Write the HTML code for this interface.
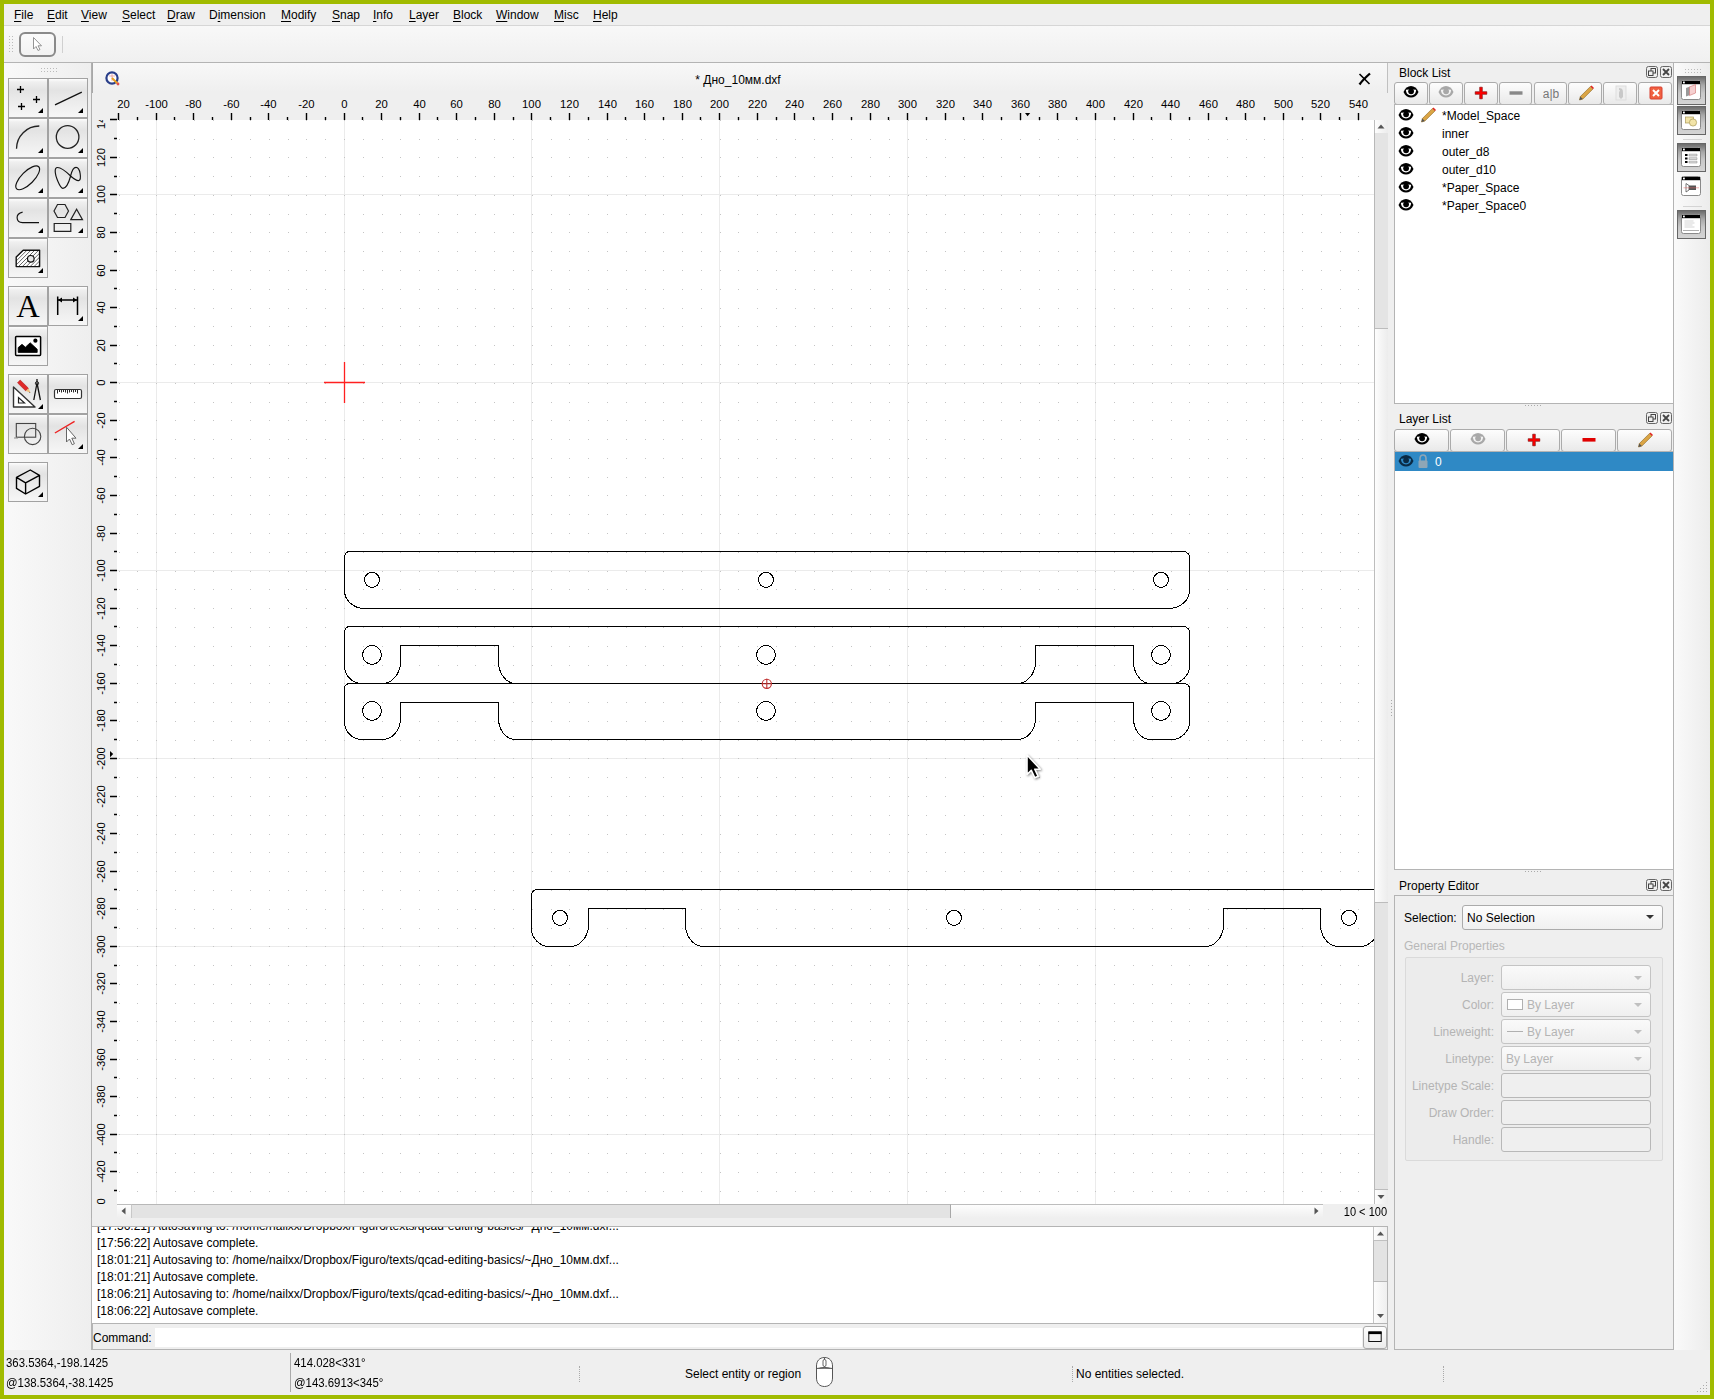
<!DOCTYPE html>
<html><head><meta charset="utf-8"><title>QCAD</title>
<style>
html,body{margin:0;padding:0}
body{width:1714px;height:1399px;overflow:hidden;position:relative;background:#a0bb00;font-family:"Liberation Sans",sans-serif;font-size:12px;color:#000}
div{position:absolute;box-sizing:border-box}
.t{white-space:nowrap;line-height:14px}
.u{text-decoration:underline;text-underline-offset:2px}
.tb{border:1px solid #a2a2a2;background:linear-gradient(#fdfdfd 0,#efefef 8%,#e3e3e3 30%,#ececec 60%,#f6f6f6 100%)}
.db{border:1px solid #ababab;border-radius:3px;background:linear-gradient(#fdfdfd,#f3f3f3 50%,#e9e9e9)}
.cb{border:1px solid #b8b8b8;border-radius:3px;background:linear-gradient(#fbfbfb,#f0f0f0)}
.dis{color:#b4b4b4}
</style></head><body>
<div style="left:4px;top:4px;width:1706px;height:1391px;background:#efefef"></div>
<div style="left:4px;top:25px;width:1706px;height:1px;background:#d6d6d6"></div>
<div class="t" style="left:14px;top:8.3px;font-size:12px;"><span class="u">F</span>ile</div>
<div class="t" style="left:47px;top:8.3px;font-size:12px;"><span class="u">E</span>dit</div>
<div class="t" style="left:81px;top:8.3px;font-size:12px;"><span class="u">V</span>iew</div>
<div class="t" style="left:122px;top:8.3px;font-size:12px;"><span class="u">S</span>elect</div>
<div class="t" style="left:167px;top:8.3px;font-size:12px;"><span class="u">D</span>raw</div>
<div class="t" style="left:209px;top:8.3px;font-size:12px;">D<span class="u">i</span>mension</div>
<div class="t" style="left:281px;top:8.3px;font-size:12px;"><span class="u">M</span>odify</div>
<div class="t" style="left:332px;top:8.3px;font-size:12px;"><span class="u">S</span>nap</div>
<div class="t" style="left:373px;top:8.3px;font-size:12px;"><span class="u">I</span>nfo</div>
<div class="t" style="left:409px;top:8.3px;font-size:12px;"><span class="u">L</span>ayer</div>
<div class="t" style="left:453px;top:8.3px;font-size:12px;"><span class="u">B</span>lock</div>
<div class="t" style="left:496px;top:8.3px;font-size:12px;"><span class="u">W</span>indow</div>
<div class="t" style="left:554px;top:8.3px;font-size:12px;"><span class="u">M</span>isc</div>
<div class="t" style="left:593px;top:8.3px;font-size:12px;"><span class="u">H</span>elp</div>
<div style="left:4px;top:26px;width:1706px;height:36px;background:linear-gradient(#f8f8f8,#f0f0f0)"></div>
<div style="left:4px;top:62px;width:1706px;height:1px;background:#b4b4b4"></div>
<svg style="position:absolute;left:9px;top:36px;" width="4" height="16" viewBox="0 0 4 16"><rect x="0" y="0" width="1" height="1" fill="#bbb"/><rect x="0" y="3" width="1" height="1" fill="#bbb"/><rect x="0" y="6" width="1" height="1" fill="#bbb"/><rect x="0" y="9" width="1" height="1" fill="#bbb"/><rect x="0" y="12" width="1" height="1" fill="#bbb"/><rect x="0" y="15" width="1" height="1" fill="#bbb"/><rect x="3" y="0" width="1" height="1" fill="#bbb"/><rect x="3" y="3" width="1" height="1" fill="#bbb"/><rect x="3" y="6" width="1" height="1" fill="#bbb"/><rect x="3" y="9" width="1" height="1" fill="#bbb"/><rect x="3" y="12" width="1" height="1" fill="#bbb"/><rect x="3" y="15" width="1" height="1" fill="#bbb"/></svg>
<div style="left:19px;top:32px;width:37px;height:25px;border:2px solid #8a8a8a;border-radius:6px;background:linear-gradient(#fafafa,#f2f2f2)"></div>
<svg style="position:absolute;left:30px;top:36px;" width="14" height="18" viewBox="0 0 14 18"><path d="M3.5 1.5V13L6 10.5L8 14.5L10 13.5L8 9.8H11.5Z" fill="#fff" stroke="#888" stroke-width="0.9"/></svg>
<div style="left:62px;top:36px;width:1px;height:17px;background:#d0d0d0"></div>
<div style="left:4px;top:63px;width:88px;height:1287px;background:linear-gradient(90deg,#f9f9f9,#eeeeee)"></div>
<svg style="position:absolute;left:41px;top:68px;" width="18" height="4" viewBox="0 0 18 4"><rect x="0" y="0" width="1" height="1" fill="#bbb"/><rect x="0" y="3" width="1" height="1" fill="#bbb"/><rect x="3" y="0" width="1" height="1" fill="#bbb"/><rect x="3" y="3" width="1" height="1" fill="#bbb"/><rect x="6" y="0" width="1" height="1" fill="#bbb"/><rect x="6" y="3" width="1" height="1" fill="#bbb"/><rect x="9" y="0" width="1" height="1" fill="#bbb"/><rect x="9" y="3" width="1" height="1" fill="#bbb"/><rect x="12" y="0" width="1" height="1" fill="#bbb"/><rect x="12" y="3" width="1" height="1" fill="#bbb"/><rect x="15" y="0" width="1" height="1" fill="#bbb"/><rect x="15" y="3" width="1" height="1" fill="#bbb"/></svg>
<div class="tb" style="left:8px;top:78px;width:40px;height:40px;"></div>
<svg style="position:absolute;left:8px;top:78px;" width="40" height="40" viewBox="0 0 40 40"><path d="M9.0 11.5h7.0M12.5 8.0v7.0M25.0 21.5h7.0M28.5 18.0v7.0M10.0 28.5h7.0M13.5 25.0v7.0" stroke="#000" stroke-width="1.3" fill="none"/><path d="M30 35L35 30V35Z" fill="#000"/></svg>
<div class="tb" style="left:48px;top:78px;width:40px;height:40px;"></div>
<svg style="position:absolute;left:48px;top:78px;" width="40" height="40" viewBox="0 0 40 40"><path d="M7 26.8L33.8 14.2" stroke="#111" stroke-width="1.3"/><path d="M30 35L35 30V35Z" fill="#000"/></svg>
<div class="tb" style="left:8px;top:118px;width:40px;height:40px;"></div>
<svg style="position:absolute;left:8px;top:118px;" width="40" height="40" viewBox="0 0 40 40"><path d="M8.5 30.8A22.8 22.8 0 0 1 31.3 8" stroke="#222" stroke-width="1.3" fill="none"/><path d="M30 35L35 30V35Z" fill="#000"/></svg>
<div class="tb" style="left:48px;top:118px;width:40px;height:40px;"></div>
<svg style="position:absolute;left:48px;top:118px;" width="40" height="40" viewBox="0 0 40 40"><circle cx="19.6" cy="19" r="11.3" stroke="#222" stroke-width="1.3" fill="none"/><path d="M30 35L35 30V35Z" fill="#000"/></svg>
<div class="tb" style="left:8px;top:158px;width:40px;height:40px;"></div>
<svg style="position:absolute;left:8px;top:158px;" width="40" height="40" viewBox="0 0 40 40"><ellipse cx="19.7" cy="19.8" rx="15.6" ry="6.3" transform="rotate(-45 19.7 19.8)" stroke="#111" stroke-width="1.15" fill="none"/><path d="M30 35L35 30V35Z" fill="#000"/></svg>
<div class="tb" style="left:48px;top:158px;width:40px;height:40px;"></div>
<svg style="position:absolute;left:48px;top:158px;" width="40" height="40" viewBox="0 0 40 40"><path d="M9.5 9.5C13 9.5 18 13.5 22.6 18C26 21 29 23 31 22.5C33.5 21.5 32.5 9.3 28 9.3C25 9.3 23.5 14 22.6 18C21 24 18 30.3 14.9 30.3C12 30.3 7.2 18 7.2 13C7.2 10.5 8 9.5 9.5 9.5Z" stroke="#111" stroke-width="1.15" fill="none"/><path d="M30 35L35 30V35Z" fill="#000"/></svg>
<div class="tb" style="left:8px;top:198px;width:40px;height:40px;"></div>
<svg style="position:absolute;left:8px;top:198px;" width="40" height="40" viewBox="0 0 40 40"><path d="M14.6 14.1C11 15 9 17.5 9.1 19.8C9.2 22.7 11.5 24.6 14.5 24.6H31" stroke="#111" stroke-width="1.15" fill="none"/><path d="M30 35L35 30V35Z" fill="#000"/></svg>
<div class="tb" style="left:48px;top:198px;width:40px;height:40px;"></div>
<svg style="position:absolute;left:48px;top:198px;" width="40" height="40" viewBox="0 0 40 40"><path d="M6 13L9.5 6.5H17L20.5 13L17 19.5H9.5ZM22.8 21.6L28.6 11.2L34.5 21.6ZM6.2 25.5H22.8V33.4H6.2Z" stroke="#222" stroke-width="1.2" fill="none"/><path d="M30 35L35 30V35Z" fill="#000"/></svg>
<div class="tb" style="left:8px;top:238px;width:40px;height:40px;"></div>
<svg style="position:absolute;left:8px;top:238px;" width="40" height="40" viewBox="0 0 40 40"><defs><clipPath id="hc"><path d="M8.2 28.6V19L15.2 12.3H31.6V28.6Z"/></clipPath></defs><path d="M8.2 28.6V19L15.2 12.3H31.6V28.6Z" fill="#fff"/><g clip-path="url(#hc)" stroke="#333" stroke-width="0.75"><path d="M-40.0 40L0.0 0M-36.1 40L3.9 0M-32.2 40L7.8 0M-28.3 40L11.7 0M-24.4 40L15.6 0M-20.5 40L19.5 0M-16.6 40L23.4 0M-12.7 40L27.3 0M-8.8 40L31.2 0M-4.9 40L35.1 0M-1.0 40L39.0 0M2.9 40L42.9 0M6.8 40L46.8 0M10.7 40L50.7 0M14.6 40L54.6 0M18.5 40L58.5 0M22.4 40L62.4 0M26.3 40L66.3 0M30.2 40L70.2 0M34.1 40L74.1 0M38.0 40L78.0 0M41.9 40L81.9 0"/></g><circle cx="22.8" cy="20.8" r="3.3" fill="#e8e8e8" stroke="#111" stroke-width="1.2"/><path d="M8.2 28.6V19L15.2 12.3H31.6V28.6Z" stroke="#111" stroke-width="1.4" fill="none" stroke-linejoin="round"/><path d="M30 35L35 30V35Z" fill="#000"/></svg>
<div class="tb" style="left:8px;top:286px;width:40px;height:40px;"></div>
<svg style="position:absolute;left:8px;top:286px;" width="40" height="40" viewBox="0 0 40 40"><text x="19.9" y="30.7" font-family="Liberation Serif, serif" font-size="32.5" text-anchor="middle" fill="#000">A</text></svg>
<div class="tb" style="left:48px;top:286px;width:40px;height:40px;"></div>
<svg style="position:absolute;left:48px;top:286px;" width="40" height="40" viewBox="0 0 40 40"><path d="M9.7 10.5V29M29.5 10.5V29M10 14H29" stroke="#000" stroke-width="1.5"/><path d="M10 14L14 11.5V16.5ZM29 14L25 11.5V16.5Z" fill="#000"/><path d="M30 35L35 30V35Z" fill="#000"/></svg>
<div class="tb" style="left:8px;top:326px;width:40px;height:40px;"></div>
<svg style="position:absolute;left:8px;top:326px;" width="40" height="40" viewBox="0 0 40 40"><rect x="7.6" y="10.4" width="25" height="19" rx="0.8" fill="#fff" stroke="#000" stroke-width="1.5"/><path d="M10.2 26.4V21.6L14 18.3L17.4 21.2L22.2 16.8L29.2 23.2V26.4Z" fill="#000" stroke="#000" stroke-width="0.8" stroke-linejoin="round"/><circle cx="27.4" cy="14.7" r="2.1" fill="#000"/></svg>
<div class="tb" style="left:8px;top:374px;width:40px;height:40px;"></div>
<svg style="position:absolute;left:8px;top:374px;" width="40" height="40" viewBox="0 0 40 40"><path d="M5.5 33V13L27 33Z" stroke="#333" stroke-width="1.4" fill="#fff" stroke-linejoin="round"/><path d="M10.5 29V23.5L16.5 29Z" stroke="#222" stroke-width="1.2" fill="none"/><path d="M9.5 8.8L12.2 6L20.5 14.3L17.8 17Z" fill="#e02828" stroke="#a01010" stroke-width="0.5"/><path d="M17.8 17L20.5 14.3L22.5 18.8Z" fill="#f0c080"/><path d="M21.5 17.8L22.5 18.8L21 18.6Z" fill="#333"/><path d="M29 5V8.5M29 9L25.8 26M29 9L32.4 26" stroke="#111" stroke-width="1.3" fill="none"/><circle cx="29" cy="9.3" r="1.6" fill="none" stroke="#111" stroke-width="1"/><path d="M30 35L35 30V35Z" fill="#000"/></svg>
<div class="tb" style="left:48px;top:374px;width:40px;height:40px;"></div>
<svg style="position:absolute;left:48px;top:374px;" width="40" height="40" viewBox="0 0 40 40"><rect x="6.5" y="15.5" width="27" height="9" rx="1.5" fill="#fff" stroke="#333" stroke-width="1.2"/><path d="M9.5 16v3.5M11.5 16v2M13.5 16v2.5M15.5 16v2M17.5 16v2.5M19.5 16v3.5M21.5 16v2.5M23.5 16v2M25.5 16v2.5M27.5 16v2M29.5 16v3.5" stroke="#111" stroke-width="0.9"/></svg>
<div class="tb" style="left:8px;top:414px;width:40px;height:40px;"></div>
<svg style="position:absolute;left:8px;top:414px;" width="40" height="40" viewBox="0 0 40 40"><rect x="8.3" y="9.5" width="19.4" height="13.7" fill="none" stroke="#444" stroke-width="1.1"/><circle cx="24.6" cy="22.4" r="8.2" fill="none" stroke="#444" stroke-width="1.1"/><path d="M6 24H10" stroke="#888" stroke-width="1"/></svg>
<div class="tb" style="left:48px;top:414px;width:40px;height:40px;"></div>
<svg style="position:absolute;left:48px;top:414px;" width="40" height="40" viewBox="0 0 40 40"><path d="M6.9 19L26.6 7.3" stroke="#ee2222" stroke-width="1.4"/><path d="M18.5 13.2V28L21.5 25L24.2 30.7L26.4 29.7L23.8 24.2H28Z" fill="#fff" stroke="#666" stroke-width="1"/><path d="M30 35L35 30V35Z" fill="#000"/></svg>
<div class="tb" style="left:8px;top:462px;width:40px;height:40px;"></div>
<svg style="position:absolute;left:8px;top:462px;" width="40" height="40" viewBox="0 0 40 40"><path d="M22.3 8L31.5 13.3V24.3L17.6 32L8.5 26.4V15.4ZM8.5 15.4L17.6 20.9L31.5 13.3M17.6 20.9V32" stroke="#000" stroke-width="1.4" fill="none" stroke-linejoin="round"/><path d="M30 35L35 30V35Z" fill="#000"/></svg>
<div style="left:91px;top:63px;width:1px;height:1287px;background:#b0b0b0"></div>
<div style="left:92px;top:63px;width:1296px;height:1163px;background:#efefef"></div>
<div style="left:92px;top:63px;width:1296px;height:29px;background:linear-gradient(#f8f8f8,#efefef)"></div>
<div style="left:92px;top:63px;width:1px;height:30px;background:#a8a8a8"></div>
<div style="left:1387px;top:63px;width:1px;height:30px;background:#c0c0c0"></div>
<svg style="position:absolute;left:105px;top:71px;" width="15" height="15" viewBox="0 0 15 15"><circle cx="7" cy="7" r="5.6" fill="#fff" stroke="#2a3f8a" stroke-width="2.2"/><path d="M4 5h6M7 3v7" stroke="#e08080" stroke-width="0.6"/><path d="M7 7L13 13" stroke="#e8a020" stroke-width="2"/><circle cx="13" cy="13" r="1.4" fill="#e05050"/></svg>
<div class="t" style="left:738px;width:0;top:72.8px;font-size:12px;"><span style="position:absolute;left:0;transform:translateX(-50%)">* Дно_10мм.dxf</span></div>
<svg style="position:absolute;left:1357px;top:72px;" width="15" height="14" viewBox="0 0 15 14"><path d="M2.5 12.5C5 9 9 5 13 1.5" stroke="#000" stroke-width="2.3" fill="none"/><path d="M2.5 2L12.5 12" stroke="#000" stroke-width="1.6"/></svg>
<div style="left:117px;top:120px;width:1257px;height:1084px;background:#fff"></div>
<svg style="position:absolute;left:0px;top:0px;pointer-events:none" width="1714" height="1399" viewBox="0 0 1714 1399"><defs><clipPath id="cc"><rect x="117" y="120" width="1257" height="1084"/></clipPath><clipPath id="rt"><rect x="117" y="92" width="1257" height="28"/></clipPath><clipPath id="rl"><rect x="93" y="120" width="24" height="1084"/></clipPath></defs><g clip-path="url(#cc)"><path d="M156.5 120V1204M344.5 120V1204M531.5 120V1204M719.5 120V1204M907.5 120V1204M1095.5 120V1204M1283.5 120V1204M117 1134.5H1374M117 946.5H1374M117 758.5H1374M117 570.5H1374M117 382.5H1374M117 194.5H1374" stroke="#ebebeb" stroke-width="1" fill="none"/>
<path d="M119 1191h1v1h-1zM119 1172h1v1h-1zM119 1153h1v1h-1zM119 1134h1v1h-1zM119 1115h1v1h-1zM119 1097h1v1h-1zM119 1078h1v1h-1zM119 1059h1v1h-1zM119 1040h1v1h-1zM119 1021h1v1h-1zM119 1003h1v1h-1zM119 984h1v1h-1zM119 965h1v1h-1zM119 946h1v1h-1zM119 928h1v1h-1zM119 909h1v1h-1zM119 890h1v1h-1zM119 871h1v1h-1zM119 852h1v1h-1zM119 834h1v1h-1zM119 815h1v1h-1zM119 796h1v1h-1zM119 777h1v1h-1zM119 758h1v1h-1zM119 740h1v1h-1zM119 721h1v1h-1zM119 702h1v1h-1zM119 683h1v1h-1zM119 665h1v1h-1zM119 646h1v1h-1zM119 627h1v1h-1zM119 608h1v1h-1zM119 589h1v1h-1zM119 571h1v1h-1zM119 552h1v1h-1zM119 533h1v1h-1zM119 514h1v1h-1zM119 495h1v1h-1zM119 477h1v1h-1zM119 458h1v1h-1zM119 439h1v1h-1zM119 420h1v1h-1zM119 402h1v1h-1zM119 383h1v1h-1zM119 364h1v1h-1zM119 345h1v1h-1zM119 326h1v1h-1zM119 308h1v1h-1zM119 289h1v1h-1zM119 270h1v1h-1zM119 251h1v1h-1zM119 232h1v1h-1zM119 214h1v1h-1zM119 195h1v1h-1zM119 176h1v1h-1zM119 157h1v1h-1zM119 139h1v1h-1zM119 120h1v1h-1zM137 1191h1v1h-1zM137 1172h1v1h-1zM137 1153h1v1h-1zM137 1134h1v1h-1zM137 1115h1v1h-1zM137 1097h1v1h-1zM137 1078h1v1h-1zM137 1059h1v1h-1zM137 1040h1v1h-1zM137 1021h1v1h-1zM137 1003h1v1h-1zM137 984h1v1h-1zM137 965h1v1h-1zM137 946h1v1h-1zM137 928h1v1h-1zM137 909h1v1h-1zM137 890h1v1h-1zM137 871h1v1h-1zM137 852h1v1h-1zM137 834h1v1h-1zM137 815h1v1h-1zM137 796h1v1h-1zM137 777h1v1h-1zM137 758h1v1h-1zM137 740h1v1h-1zM137 721h1v1h-1zM137 702h1v1h-1zM137 683h1v1h-1zM137 665h1v1h-1zM137 646h1v1h-1zM137 627h1v1h-1zM137 608h1v1h-1zM137 589h1v1h-1zM137 571h1v1h-1zM137 552h1v1h-1zM137 533h1v1h-1zM137 514h1v1h-1zM137 495h1v1h-1zM137 477h1v1h-1zM137 458h1v1h-1zM137 439h1v1h-1zM137 420h1v1h-1zM137 402h1v1h-1zM137 383h1v1h-1zM137 364h1v1h-1zM137 345h1v1h-1zM137 326h1v1h-1zM137 308h1v1h-1zM137 289h1v1h-1zM137 270h1v1h-1zM137 251h1v1h-1zM137 232h1v1h-1zM137 214h1v1h-1zM137 195h1v1h-1zM137 176h1v1h-1zM137 157h1v1h-1zM137 139h1v1h-1zM137 120h1v1h-1zM156 1191h1v1h-1zM156 1172h1v1h-1zM156 1153h1v1h-1zM156 1134h1v1h-1zM156 1115h1v1h-1zM156 1097h1v1h-1zM156 1078h1v1h-1zM156 1059h1v1h-1zM156 1040h1v1h-1zM156 1021h1v1h-1zM156 1003h1v1h-1zM156 984h1v1h-1zM156 965h1v1h-1zM156 946h1v1h-1zM156 928h1v1h-1zM156 909h1v1h-1zM156 890h1v1h-1zM156 871h1v1h-1zM156 852h1v1h-1zM156 834h1v1h-1zM156 815h1v1h-1zM156 796h1v1h-1zM156 777h1v1h-1zM156 758h1v1h-1zM156 740h1v1h-1zM156 721h1v1h-1zM156 702h1v1h-1zM156 683h1v1h-1zM156 665h1v1h-1zM156 646h1v1h-1zM156 627h1v1h-1zM156 608h1v1h-1zM156 589h1v1h-1zM156 571h1v1h-1zM156 552h1v1h-1zM156 533h1v1h-1zM156 514h1v1h-1zM156 495h1v1h-1zM156 477h1v1h-1zM156 458h1v1h-1zM156 439h1v1h-1zM156 420h1v1h-1zM156 402h1v1h-1zM156 383h1v1h-1zM156 364h1v1h-1zM156 345h1v1h-1zM156 326h1v1h-1zM156 308h1v1h-1zM156 289h1v1h-1zM156 270h1v1h-1zM156 251h1v1h-1zM156 232h1v1h-1zM156 214h1v1h-1zM156 195h1v1h-1zM156 176h1v1h-1zM156 157h1v1h-1zM156 139h1v1h-1zM156 120h1v1h-1zM175 1191h1v1h-1zM175 1172h1v1h-1zM175 1153h1v1h-1zM175 1134h1v1h-1zM175 1115h1v1h-1zM175 1097h1v1h-1zM175 1078h1v1h-1zM175 1059h1v1h-1zM175 1040h1v1h-1zM175 1021h1v1h-1zM175 1003h1v1h-1zM175 984h1v1h-1zM175 965h1v1h-1zM175 946h1v1h-1zM175 928h1v1h-1zM175 909h1v1h-1zM175 890h1v1h-1zM175 871h1v1h-1zM175 852h1v1h-1zM175 834h1v1h-1zM175 815h1v1h-1zM175 796h1v1h-1zM175 777h1v1h-1zM175 758h1v1h-1zM175 740h1v1h-1zM175 721h1v1h-1zM175 702h1v1h-1zM175 683h1v1h-1zM175 665h1v1h-1zM175 646h1v1h-1zM175 627h1v1h-1zM175 608h1v1h-1zM175 589h1v1h-1zM175 571h1v1h-1zM175 552h1v1h-1zM175 533h1v1h-1zM175 514h1v1h-1zM175 495h1v1h-1zM175 477h1v1h-1zM175 458h1v1h-1zM175 439h1v1h-1zM175 420h1v1h-1zM175 402h1v1h-1zM175 383h1v1h-1zM175 364h1v1h-1zM175 345h1v1h-1zM175 326h1v1h-1zM175 308h1v1h-1zM175 289h1v1h-1zM175 270h1v1h-1zM175 251h1v1h-1zM175 232h1v1h-1zM175 214h1v1h-1zM175 195h1v1h-1zM175 176h1v1h-1zM175 157h1v1h-1zM175 139h1v1h-1zM175 120h1v1h-1zM194 1191h1v1h-1zM194 1172h1v1h-1zM194 1153h1v1h-1zM194 1134h1v1h-1zM194 1115h1v1h-1zM194 1097h1v1h-1zM194 1078h1v1h-1zM194 1059h1v1h-1zM194 1040h1v1h-1zM194 1021h1v1h-1zM194 1003h1v1h-1zM194 984h1v1h-1zM194 965h1v1h-1zM194 946h1v1h-1zM194 928h1v1h-1zM194 909h1v1h-1zM194 890h1v1h-1zM194 871h1v1h-1zM194 852h1v1h-1zM194 834h1v1h-1zM194 815h1v1h-1zM194 796h1v1h-1zM194 777h1v1h-1zM194 758h1v1h-1zM194 740h1v1h-1zM194 721h1v1h-1zM194 702h1v1h-1zM194 683h1v1h-1zM194 665h1v1h-1zM194 646h1v1h-1zM194 627h1v1h-1zM194 608h1v1h-1zM194 589h1v1h-1zM194 571h1v1h-1zM194 552h1v1h-1zM194 533h1v1h-1zM194 514h1v1h-1zM194 495h1v1h-1zM194 477h1v1h-1zM194 458h1v1h-1zM194 439h1v1h-1zM194 420h1v1h-1zM194 402h1v1h-1zM194 383h1v1h-1zM194 364h1v1h-1zM194 345h1v1h-1zM194 326h1v1h-1zM194 308h1v1h-1zM194 289h1v1h-1zM194 270h1v1h-1zM194 251h1v1h-1zM194 232h1v1h-1zM194 214h1v1h-1zM194 195h1v1h-1zM194 176h1v1h-1zM194 157h1v1h-1zM194 139h1v1h-1zM194 120h1v1h-1zM213 1191h1v1h-1zM213 1172h1v1h-1zM213 1153h1v1h-1zM213 1134h1v1h-1zM213 1115h1v1h-1zM213 1097h1v1h-1zM213 1078h1v1h-1zM213 1059h1v1h-1zM213 1040h1v1h-1zM213 1021h1v1h-1zM213 1003h1v1h-1zM213 984h1v1h-1zM213 965h1v1h-1zM213 946h1v1h-1zM213 928h1v1h-1zM213 909h1v1h-1zM213 890h1v1h-1zM213 871h1v1h-1zM213 852h1v1h-1zM213 834h1v1h-1zM213 815h1v1h-1zM213 796h1v1h-1zM213 777h1v1h-1zM213 758h1v1h-1zM213 740h1v1h-1zM213 721h1v1h-1zM213 702h1v1h-1zM213 683h1v1h-1zM213 665h1v1h-1zM213 646h1v1h-1zM213 627h1v1h-1zM213 608h1v1h-1zM213 589h1v1h-1zM213 571h1v1h-1zM213 552h1v1h-1zM213 533h1v1h-1zM213 514h1v1h-1zM213 495h1v1h-1zM213 477h1v1h-1zM213 458h1v1h-1zM213 439h1v1h-1zM213 420h1v1h-1zM213 402h1v1h-1zM213 383h1v1h-1zM213 364h1v1h-1zM213 345h1v1h-1zM213 326h1v1h-1zM213 308h1v1h-1zM213 289h1v1h-1zM213 270h1v1h-1zM213 251h1v1h-1zM213 232h1v1h-1zM213 214h1v1h-1zM213 195h1v1h-1zM213 176h1v1h-1zM213 157h1v1h-1zM213 139h1v1h-1zM213 120h1v1h-1zM231 1191h1v1h-1zM231 1172h1v1h-1zM231 1153h1v1h-1zM231 1134h1v1h-1zM231 1115h1v1h-1zM231 1097h1v1h-1zM231 1078h1v1h-1zM231 1059h1v1h-1zM231 1040h1v1h-1zM231 1021h1v1h-1zM231 1003h1v1h-1zM231 984h1v1h-1zM231 965h1v1h-1zM231 946h1v1h-1zM231 928h1v1h-1zM231 909h1v1h-1zM231 890h1v1h-1zM231 871h1v1h-1zM231 852h1v1h-1zM231 834h1v1h-1zM231 815h1v1h-1zM231 796h1v1h-1zM231 777h1v1h-1zM231 758h1v1h-1zM231 740h1v1h-1zM231 721h1v1h-1zM231 702h1v1h-1zM231 683h1v1h-1zM231 665h1v1h-1zM231 646h1v1h-1zM231 627h1v1h-1zM231 608h1v1h-1zM231 589h1v1h-1zM231 571h1v1h-1zM231 552h1v1h-1zM231 533h1v1h-1zM231 514h1v1h-1zM231 495h1v1h-1zM231 477h1v1h-1zM231 458h1v1h-1zM231 439h1v1h-1zM231 420h1v1h-1zM231 402h1v1h-1zM231 383h1v1h-1zM231 364h1v1h-1zM231 345h1v1h-1zM231 326h1v1h-1zM231 308h1v1h-1zM231 289h1v1h-1zM231 270h1v1h-1zM231 251h1v1h-1zM231 232h1v1h-1zM231 214h1v1h-1zM231 195h1v1h-1zM231 176h1v1h-1zM231 157h1v1h-1zM231 139h1v1h-1zM231 120h1v1h-1zM250 1191h1v1h-1zM250 1172h1v1h-1zM250 1153h1v1h-1zM250 1134h1v1h-1zM250 1115h1v1h-1zM250 1097h1v1h-1zM250 1078h1v1h-1zM250 1059h1v1h-1zM250 1040h1v1h-1zM250 1021h1v1h-1zM250 1003h1v1h-1zM250 984h1v1h-1zM250 965h1v1h-1zM250 946h1v1h-1zM250 928h1v1h-1zM250 909h1v1h-1zM250 890h1v1h-1zM250 871h1v1h-1zM250 852h1v1h-1zM250 834h1v1h-1zM250 815h1v1h-1zM250 796h1v1h-1zM250 777h1v1h-1zM250 758h1v1h-1zM250 740h1v1h-1zM250 721h1v1h-1zM250 702h1v1h-1zM250 683h1v1h-1zM250 665h1v1h-1zM250 646h1v1h-1zM250 627h1v1h-1zM250 608h1v1h-1zM250 589h1v1h-1zM250 571h1v1h-1zM250 552h1v1h-1zM250 533h1v1h-1zM250 514h1v1h-1zM250 495h1v1h-1zM250 477h1v1h-1zM250 458h1v1h-1zM250 439h1v1h-1zM250 420h1v1h-1zM250 402h1v1h-1zM250 383h1v1h-1zM250 364h1v1h-1zM250 345h1v1h-1zM250 326h1v1h-1zM250 308h1v1h-1zM250 289h1v1h-1zM250 270h1v1h-1zM250 251h1v1h-1zM250 232h1v1h-1zM250 214h1v1h-1zM250 195h1v1h-1zM250 176h1v1h-1zM250 157h1v1h-1zM250 139h1v1h-1zM250 120h1v1h-1zM269 1191h1v1h-1zM269 1172h1v1h-1zM269 1153h1v1h-1zM269 1134h1v1h-1zM269 1115h1v1h-1zM269 1097h1v1h-1zM269 1078h1v1h-1zM269 1059h1v1h-1zM269 1040h1v1h-1zM269 1021h1v1h-1zM269 1003h1v1h-1zM269 984h1v1h-1zM269 965h1v1h-1zM269 946h1v1h-1zM269 928h1v1h-1zM269 909h1v1h-1zM269 890h1v1h-1zM269 871h1v1h-1zM269 852h1v1h-1zM269 834h1v1h-1zM269 815h1v1h-1zM269 796h1v1h-1zM269 777h1v1h-1zM269 758h1v1h-1zM269 740h1v1h-1zM269 721h1v1h-1zM269 702h1v1h-1zM269 683h1v1h-1zM269 665h1v1h-1zM269 646h1v1h-1zM269 627h1v1h-1zM269 608h1v1h-1zM269 589h1v1h-1zM269 571h1v1h-1zM269 552h1v1h-1zM269 533h1v1h-1zM269 514h1v1h-1zM269 495h1v1h-1zM269 477h1v1h-1zM269 458h1v1h-1zM269 439h1v1h-1zM269 420h1v1h-1zM269 402h1v1h-1zM269 383h1v1h-1zM269 364h1v1h-1zM269 345h1v1h-1zM269 326h1v1h-1zM269 308h1v1h-1zM269 289h1v1h-1zM269 270h1v1h-1zM269 251h1v1h-1zM269 232h1v1h-1zM269 214h1v1h-1zM269 195h1v1h-1zM269 176h1v1h-1zM269 157h1v1h-1zM269 139h1v1h-1zM269 120h1v1h-1zM288 1191h1v1h-1zM288 1172h1v1h-1zM288 1153h1v1h-1zM288 1134h1v1h-1zM288 1115h1v1h-1zM288 1097h1v1h-1zM288 1078h1v1h-1zM288 1059h1v1h-1zM288 1040h1v1h-1zM288 1021h1v1h-1zM288 1003h1v1h-1zM288 984h1v1h-1zM288 965h1v1h-1zM288 946h1v1h-1zM288 928h1v1h-1zM288 909h1v1h-1zM288 890h1v1h-1zM288 871h1v1h-1zM288 852h1v1h-1zM288 834h1v1h-1zM288 815h1v1h-1zM288 796h1v1h-1zM288 777h1v1h-1zM288 758h1v1h-1zM288 740h1v1h-1zM288 721h1v1h-1zM288 702h1v1h-1zM288 683h1v1h-1zM288 665h1v1h-1zM288 646h1v1h-1zM288 627h1v1h-1zM288 608h1v1h-1zM288 589h1v1h-1zM288 571h1v1h-1zM288 552h1v1h-1zM288 533h1v1h-1zM288 514h1v1h-1zM288 495h1v1h-1zM288 477h1v1h-1zM288 458h1v1h-1zM288 439h1v1h-1zM288 420h1v1h-1zM288 402h1v1h-1zM288 383h1v1h-1zM288 364h1v1h-1zM288 345h1v1h-1zM288 326h1v1h-1zM288 308h1v1h-1zM288 289h1v1h-1zM288 270h1v1h-1zM288 251h1v1h-1zM288 232h1v1h-1zM288 214h1v1h-1zM288 195h1v1h-1zM288 176h1v1h-1zM288 157h1v1h-1zM288 139h1v1h-1zM288 120h1v1h-1zM306 1191h1v1h-1zM306 1172h1v1h-1zM306 1153h1v1h-1zM306 1134h1v1h-1zM306 1115h1v1h-1zM306 1097h1v1h-1zM306 1078h1v1h-1zM306 1059h1v1h-1zM306 1040h1v1h-1zM306 1021h1v1h-1zM306 1003h1v1h-1zM306 984h1v1h-1zM306 965h1v1h-1zM306 946h1v1h-1zM306 928h1v1h-1zM306 909h1v1h-1zM306 890h1v1h-1zM306 871h1v1h-1zM306 852h1v1h-1zM306 834h1v1h-1zM306 815h1v1h-1zM306 796h1v1h-1zM306 777h1v1h-1zM306 758h1v1h-1zM306 740h1v1h-1zM306 721h1v1h-1zM306 702h1v1h-1zM306 683h1v1h-1zM306 665h1v1h-1zM306 646h1v1h-1zM306 627h1v1h-1zM306 608h1v1h-1zM306 589h1v1h-1zM306 571h1v1h-1zM306 552h1v1h-1zM306 533h1v1h-1zM306 514h1v1h-1zM306 495h1v1h-1zM306 477h1v1h-1zM306 458h1v1h-1zM306 439h1v1h-1zM306 420h1v1h-1zM306 402h1v1h-1zM306 383h1v1h-1zM306 364h1v1h-1zM306 345h1v1h-1zM306 326h1v1h-1zM306 308h1v1h-1zM306 289h1v1h-1zM306 270h1v1h-1zM306 251h1v1h-1zM306 232h1v1h-1zM306 214h1v1h-1zM306 195h1v1h-1zM306 176h1v1h-1zM306 157h1v1h-1zM306 139h1v1h-1zM306 120h1v1h-1zM325 1191h1v1h-1zM325 1172h1v1h-1zM325 1153h1v1h-1zM325 1134h1v1h-1zM325 1115h1v1h-1zM325 1097h1v1h-1zM325 1078h1v1h-1zM325 1059h1v1h-1zM325 1040h1v1h-1zM325 1021h1v1h-1zM325 1003h1v1h-1zM325 984h1v1h-1zM325 965h1v1h-1zM325 946h1v1h-1zM325 928h1v1h-1zM325 909h1v1h-1zM325 890h1v1h-1zM325 871h1v1h-1zM325 852h1v1h-1zM325 834h1v1h-1zM325 815h1v1h-1zM325 796h1v1h-1zM325 777h1v1h-1zM325 758h1v1h-1zM325 740h1v1h-1zM325 721h1v1h-1zM325 702h1v1h-1zM325 683h1v1h-1zM325 665h1v1h-1zM325 646h1v1h-1zM325 627h1v1h-1zM325 608h1v1h-1zM325 589h1v1h-1zM325 571h1v1h-1zM325 552h1v1h-1zM325 533h1v1h-1zM325 514h1v1h-1zM325 495h1v1h-1zM325 477h1v1h-1zM325 458h1v1h-1zM325 439h1v1h-1zM325 420h1v1h-1zM325 402h1v1h-1zM325 383h1v1h-1zM325 364h1v1h-1zM325 345h1v1h-1zM325 326h1v1h-1zM325 308h1v1h-1zM325 289h1v1h-1zM325 270h1v1h-1zM325 251h1v1h-1zM325 232h1v1h-1zM325 214h1v1h-1zM325 195h1v1h-1zM325 176h1v1h-1zM325 157h1v1h-1zM325 139h1v1h-1zM325 120h1v1h-1zM344 1191h1v1h-1zM344 1172h1v1h-1zM344 1153h1v1h-1zM344 1134h1v1h-1zM344 1115h1v1h-1zM344 1097h1v1h-1zM344 1078h1v1h-1zM344 1059h1v1h-1zM344 1040h1v1h-1zM344 1021h1v1h-1zM344 1003h1v1h-1zM344 984h1v1h-1zM344 965h1v1h-1zM344 946h1v1h-1zM344 928h1v1h-1zM344 909h1v1h-1zM344 890h1v1h-1zM344 871h1v1h-1zM344 852h1v1h-1zM344 834h1v1h-1zM344 815h1v1h-1zM344 796h1v1h-1zM344 777h1v1h-1zM344 758h1v1h-1zM344 740h1v1h-1zM344 721h1v1h-1zM344 702h1v1h-1zM344 683h1v1h-1zM344 665h1v1h-1zM344 646h1v1h-1zM344 627h1v1h-1zM344 608h1v1h-1zM344 589h1v1h-1zM344 571h1v1h-1zM344 552h1v1h-1zM344 533h1v1h-1zM344 514h1v1h-1zM344 495h1v1h-1zM344 477h1v1h-1zM344 458h1v1h-1zM344 439h1v1h-1zM344 420h1v1h-1zM344 402h1v1h-1zM344 383h1v1h-1zM344 364h1v1h-1zM344 345h1v1h-1zM344 326h1v1h-1zM344 308h1v1h-1zM344 289h1v1h-1zM344 270h1v1h-1zM344 251h1v1h-1zM344 232h1v1h-1zM344 214h1v1h-1zM344 195h1v1h-1zM344 176h1v1h-1zM344 157h1v1h-1zM344 139h1v1h-1zM344 120h1v1h-1zM363 1191h1v1h-1zM363 1172h1v1h-1zM363 1153h1v1h-1zM363 1134h1v1h-1zM363 1115h1v1h-1zM363 1097h1v1h-1zM363 1078h1v1h-1zM363 1059h1v1h-1zM363 1040h1v1h-1zM363 1021h1v1h-1zM363 1003h1v1h-1zM363 984h1v1h-1zM363 965h1v1h-1zM363 946h1v1h-1zM363 928h1v1h-1zM363 909h1v1h-1zM363 890h1v1h-1zM363 871h1v1h-1zM363 852h1v1h-1zM363 834h1v1h-1zM363 815h1v1h-1zM363 796h1v1h-1zM363 777h1v1h-1zM363 758h1v1h-1zM363 740h1v1h-1zM363 721h1v1h-1zM363 702h1v1h-1zM363 683h1v1h-1zM363 665h1v1h-1zM363 646h1v1h-1zM363 627h1v1h-1zM363 608h1v1h-1zM363 589h1v1h-1zM363 571h1v1h-1zM363 552h1v1h-1zM363 533h1v1h-1zM363 514h1v1h-1zM363 495h1v1h-1zM363 477h1v1h-1zM363 458h1v1h-1zM363 439h1v1h-1zM363 420h1v1h-1zM363 402h1v1h-1zM363 383h1v1h-1zM363 364h1v1h-1zM363 345h1v1h-1zM363 326h1v1h-1zM363 308h1v1h-1zM363 289h1v1h-1zM363 270h1v1h-1zM363 251h1v1h-1zM363 232h1v1h-1zM363 214h1v1h-1zM363 195h1v1h-1zM363 176h1v1h-1zM363 157h1v1h-1zM363 139h1v1h-1zM363 120h1v1h-1zM382 1191h1v1h-1zM382 1172h1v1h-1zM382 1153h1v1h-1zM382 1134h1v1h-1zM382 1115h1v1h-1zM382 1097h1v1h-1zM382 1078h1v1h-1zM382 1059h1v1h-1zM382 1040h1v1h-1zM382 1021h1v1h-1zM382 1003h1v1h-1zM382 984h1v1h-1zM382 965h1v1h-1zM382 946h1v1h-1zM382 928h1v1h-1zM382 909h1v1h-1zM382 890h1v1h-1zM382 871h1v1h-1zM382 852h1v1h-1zM382 834h1v1h-1zM382 815h1v1h-1zM382 796h1v1h-1zM382 777h1v1h-1zM382 758h1v1h-1zM382 740h1v1h-1zM382 721h1v1h-1zM382 702h1v1h-1zM382 683h1v1h-1zM382 665h1v1h-1zM382 646h1v1h-1zM382 627h1v1h-1zM382 608h1v1h-1zM382 589h1v1h-1zM382 571h1v1h-1zM382 552h1v1h-1zM382 533h1v1h-1zM382 514h1v1h-1zM382 495h1v1h-1zM382 477h1v1h-1zM382 458h1v1h-1zM382 439h1v1h-1zM382 420h1v1h-1zM382 402h1v1h-1zM382 383h1v1h-1zM382 364h1v1h-1zM382 345h1v1h-1zM382 326h1v1h-1zM382 308h1v1h-1zM382 289h1v1h-1zM382 270h1v1h-1zM382 251h1v1h-1zM382 232h1v1h-1zM382 214h1v1h-1zM382 195h1v1h-1zM382 176h1v1h-1zM382 157h1v1h-1zM382 139h1v1h-1zM382 120h1v1h-1zM400 1191h1v1h-1zM400 1172h1v1h-1zM400 1153h1v1h-1zM400 1134h1v1h-1zM400 1115h1v1h-1zM400 1097h1v1h-1zM400 1078h1v1h-1zM400 1059h1v1h-1zM400 1040h1v1h-1zM400 1021h1v1h-1zM400 1003h1v1h-1zM400 984h1v1h-1zM400 965h1v1h-1zM400 946h1v1h-1zM400 928h1v1h-1zM400 909h1v1h-1zM400 890h1v1h-1zM400 871h1v1h-1zM400 852h1v1h-1zM400 834h1v1h-1zM400 815h1v1h-1zM400 796h1v1h-1zM400 777h1v1h-1zM400 758h1v1h-1zM400 740h1v1h-1zM400 721h1v1h-1zM400 702h1v1h-1zM400 683h1v1h-1zM400 665h1v1h-1zM400 646h1v1h-1zM400 627h1v1h-1zM400 608h1v1h-1zM400 589h1v1h-1zM400 571h1v1h-1zM400 552h1v1h-1zM400 533h1v1h-1zM400 514h1v1h-1zM400 495h1v1h-1zM400 477h1v1h-1zM400 458h1v1h-1zM400 439h1v1h-1zM400 420h1v1h-1zM400 402h1v1h-1zM400 383h1v1h-1zM400 364h1v1h-1zM400 345h1v1h-1zM400 326h1v1h-1zM400 308h1v1h-1zM400 289h1v1h-1zM400 270h1v1h-1zM400 251h1v1h-1zM400 232h1v1h-1zM400 214h1v1h-1zM400 195h1v1h-1zM400 176h1v1h-1zM400 157h1v1h-1zM400 139h1v1h-1zM400 120h1v1h-1zM419 1191h1v1h-1zM419 1172h1v1h-1zM419 1153h1v1h-1zM419 1134h1v1h-1zM419 1115h1v1h-1zM419 1097h1v1h-1zM419 1078h1v1h-1zM419 1059h1v1h-1zM419 1040h1v1h-1zM419 1021h1v1h-1zM419 1003h1v1h-1zM419 984h1v1h-1zM419 965h1v1h-1zM419 946h1v1h-1zM419 928h1v1h-1zM419 909h1v1h-1zM419 890h1v1h-1zM419 871h1v1h-1zM419 852h1v1h-1zM419 834h1v1h-1zM419 815h1v1h-1zM419 796h1v1h-1zM419 777h1v1h-1zM419 758h1v1h-1zM419 740h1v1h-1zM419 721h1v1h-1zM419 702h1v1h-1zM419 683h1v1h-1zM419 665h1v1h-1zM419 646h1v1h-1zM419 627h1v1h-1zM419 608h1v1h-1zM419 589h1v1h-1zM419 571h1v1h-1zM419 552h1v1h-1zM419 533h1v1h-1zM419 514h1v1h-1zM419 495h1v1h-1zM419 477h1v1h-1zM419 458h1v1h-1zM419 439h1v1h-1zM419 420h1v1h-1zM419 402h1v1h-1zM419 383h1v1h-1zM419 364h1v1h-1zM419 345h1v1h-1zM419 326h1v1h-1zM419 308h1v1h-1zM419 289h1v1h-1zM419 270h1v1h-1zM419 251h1v1h-1zM419 232h1v1h-1zM419 214h1v1h-1zM419 195h1v1h-1zM419 176h1v1h-1zM419 157h1v1h-1zM419 139h1v1h-1zM419 120h1v1h-1zM438 1191h1v1h-1zM438 1172h1v1h-1zM438 1153h1v1h-1zM438 1134h1v1h-1zM438 1115h1v1h-1zM438 1097h1v1h-1zM438 1078h1v1h-1zM438 1059h1v1h-1zM438 1040h1v1h-1zM438 1021h1v1h-1zM438 1003h1v1h-1zM438 984h1v1h-1zM438 965h1v1h-1zM438 946h1v1h-1zM438 928h1v1h-1zM438 909h1v1h-1zM438 890h1v1h-1zM438 871h1v1h-1zM438 852h1v1h-1zM438 834h1v1h-1zM438 815h1v1h-1zM438 796h1v1h-1zM438 777h1v1h-1zM438 758h1v1h-1zM438 740h1v1h-1zM438 721h1v1h-1zM438 702h1v1h-1zM438 683h1v1h-1zM438 665h1v1h-1zM438 646h1v1h-1zM438 627h1v1h-1zM438 608h1v1h-1zM438 589h1v1h-1zM438 571h1v1h-1zM438 552h1v1h-1zM438 533h1v1h-1zM438 514h1v1h-1zM438 495h1v1h-1zM438 477h1v1h-1zM438 458h1v1h-1zM438 439h1v1h-1zM438 420h1v1h-1zM438 402h1v1h-1zM438 383h1v1h-1zM438 364h1v1h-1zM438 345h1v1h-1zM438 326h1v1h-1zM438 308h1v1h-1zM438 289h1v1h-1zM438 270h1v1h-1zM438 251h1v1h-1zM438 232h1v1h-1zM438 214h1v1h-1zM438 195h1v1h-1zM438 176h1v1h-1zM438 157h1v1h-1zM438 139h1v1h-1zM438 120h1v1h-1zM457 1191h1v1h-1zM457 1172h1v1h-1zM457 1153h1v1h-1zM457 1134h1v1h-1zM457 1115h1v1h-1zM457 1097h1v1h-1zM457 1078h1v1h-1zM457 1059h1v1h-1zM457 1040h1v1h-1zM457 1021h1v1h-1zM457 1003h1v1h-1zM457 984h1v1h-1zM457 965h1v1h-1zM457 946h1v1h-1zM457 928h1v1h-1zM457 909h1v1h-1zM457 890h1v1h-1zM457 871h1v1h-1zM457 852h1v1h-1zM457 834h1v1h-1zM457 815h1v1h-1zM457 796h1v1h-1zM457 777h1v1h-1zM457 758h1v1h-1zM457 740h1v1h-1zM457 721h1v1h-1zM457 702h1v1h-1zM457 683h1v1h-1zM457 665h1v1h-1zM457 646h1v1h-1zM457 627h1v1h-1zM457 608h1v1h-1zM457 589h1v1h-1zM457 571h1v1h-1zM457 552h1v1h-1zM457 533h1v1h-1zM457 514h1v1h-1zM457 495h1v1h-1zM457 477h1v1h-1zM457 458h1v1h-1zM457 439h1v1h-1zM457 420h1v1h-1zM457 402h1v1h-1zM457 383h1v1h-1zM457 364h1v1h-1zM457 345h1v1h-1zM457 326h1v1h-1zM457 308h1v1h-1zM457 289h1v1h-1zM457 270h1v1h-1zM457 251h1v1h-1zM457 232h1v1h-1zM457 214h1v1h-1zM457 195h1v1h-1zM457 176h1v1h-1zM457 157h1v1h-1zM457 139h1v1h-1zM457 120h1v1h-1zM475 1191h1v1h-1zM475 1172h1v1h-1zM475 1153h1v1h-1zM475 1134h1v1h-1zM475 1115h1v1h-1zM475 1097h1v1h-1zM475 1078h1v1h-1zM475 1059h1v1h-1zM475 1040h1v1h-1zM475 1021h1v1h-1zM475 1003h1v1h-1zM475 984h1v1h-1zM475 965h1v1h-1zM475 946h1v1h-1zM475 928h1v1h-1zM475 909h1v1h-1zM475 890h1v1h-1zM475 871h1v1h-1zM475 852h1v1h-1zM475 834h1v1h-1zM475 815h1v1h-1zM475 796h1v1h-1zM475 777h1v1h-1zM475 758h1v1h-1zM475 740h1v1h-1zM475 721h1v1h-1zM475 702h1v1h-1zM475 683h1v1h-1zM475 665h1v1h-1zM475 646h1v1h-1zM475 627h1v1h-1zM475 608h1v1h-1zM475 589h1v1h-1zM475 571h1v1h-1zM475 552h1v1h-1zM475 533h1v1h-1zM475 514h1v1h-1zM475 495h1v1h-1zM475 477h1v1h-1zM475 458h1v1h-1zM475 439h1v1h-1zM475 420h1v1h-1zM475 402h1v1h-1zM475 383h1v1h-1zM475 364h1v1h-1zM475 345h1v1h-1zM475 326h1v1h-1zM475 308h1v1h-1zM475 289h1v1h-1zM475 270h1v1h-1zM475 251h1v1h-1zM475 232h1v1h-1zM475 214h1v1h-1zM475 195h1v1h-1zM475 176h1v1h-1zM475 157h1v1h-1zM475 139h1v1h-1zM475 120h1v1h-1zM494 1191h1v1h-1zM494 1172h1v1h-1zM494 1153h1v1h-1zM494 1134h1v1h-1zM494 1115h1v1h-1zM494 1097h1v1h-1zM494 1078h1v1h-1zM494 1059h1v1h-1zM494 1040h1v1h-1zM494 1021h1v1h-1zM494 1003h1v1h-1zM494 984h1v1h-1zM494 965h1v1h-1zM494 946h1v1h-1zM494 928h1v1h-1zM494 909h1v1h-1zM494 890h1v1h-1zM494 871h1v1h-1zM494 852h1v1h-1zM494 834h1v1h-1zM494 815h1v1h-1zM494 796h1v1h-1zM494 777h1v1h-1zM494 758h1v1h-1zM494 740h1v1h-1zM494 721h1v1h-1zM494 702h1v1h-1zM494 683h1v1h-1zM494 665h1v1h-1zM494 646h1v1h-1zM494 627h1v1h-1zM494 608h1v1h-1zM494 589h1v1h-1zM494 571h1v1h-1zM494 552h1v1h-1zM494 533h1v1h-1zM494 514h1v1h-1zM494 495h1v1h-1zM494 477h1v1h-1zM494 458h1v1h-1zM494 439h1v1h-1zM494 420h1v1h-1zM494 402h1v1h-1zM494 383h1v1h-1zM494 364h1v1h-1zM494 345h1v1h-1zM494 326h1v1h-1zM494 308h1v1h-1zM494 289h1v1h-1zM494 270h1v1h-1zM494 251h1v1h-1zM494 232h1v1h-1zM494 214h1v1h-1zM494 195h1v1h-1zM494 176h1v1h-1zM494 157h1v1h-1zM494 139h1v1h-1zM494 120h1v1h-1zM513 1191h1v1h-1zM513 1172h1v1h-1zM513 1153h1v1h-1zM513 1134h1v1h-1zM513 1115h1v1h-1zM513 1097h1v1h-1zM513 1078h1v1h-1zM513 1059h1v1h-1zM513 1040h1v1h-1zM513 1021h1v1h-1zM513 1003h1v1h-1zM513 984h1v1h-1zM513 965h1v1h-1zM513 946h1v1h-1zM513 928h1v1h-1zM513 909h1v1h-1zM513 890h1v1h-1zM513 871h1v1h-1zM513 852h1v1h-1zM513 834h1v1h-1zM513 815h1v1h-1zM513 796h1v1h-1zM513 777h1v1h-1zM513 758h1v1h-1zM513 740h1v1h-1zM513 721h1v1h-1zM513 702h1v1h-1zM513 683h1v1h-1zM513 665h1v1h-1zM513 646h1v1h-1zM513 627h1v1h-1zM513 608h1v1h-1zM513 589h1v1h-1zM513 571h1v1h-1zM513 552h1v1h-1zM513 533h1v1h-1zM513 514h1v1h-1zM513 495h1v1h-1zM513 477h1v1h-1zM513 458h1v1h-1zM513 439h1v1h-1zM513 420h1v1h-1zM513 402h1v1h-1zM513 383h1v1h-1zM513 364h1v1h-1zM513 345h1v1h-1zM513 326h1v1h-1zM513 308h1v1h-1zM513 289h1v1h-1zM513 270h1v1h-1zM513 251h1v1h-1zM513 232h1v1h-1zM513 214h1v1h-1zM513 195h1v1h-1zM513 176h1v1h-1zM513 157h1v1h-1zM513 139h1v1h-1zM513 120h1v1h-1zM532 1191h1v1h-1zM532 1172h1v1h-1zM532 1153h1v1h-1zM532 1134h1v1h-1zM532 1115h1v1h-1zM532 1097h1v1h-1zM532 1078h1v1h-1zM532 1059h1v1h-1zM532 1040h1v1h-1zM532 1021h1v1h-1zM532 1003h1v1h-1zM532 984h1v1h-1zM532 965h1v1h-1zM532 946h1v1h-1zM532 928h1v1h-1zM532 909h1v1h-1zM532 890h1v1h-1zM532 871h1v1h-1zM532 852h1v1h-1zM532 834h1v1h-1zM532 815h1v1h-1zM532 796h1v1h-1zM532 777h1v1h-1zM532 758h1v1h-1zM532 740h1v1h-1zM532 721h1v1h-1zM532 702h1v1h-1zM532 683h1v1h-1zM532 665h1v1h-1zM532 646h1v1h-1zM532 627h1v1h-1zM532 608h1v1h-1zM532 589h1v1h-1zM532 571h1v1h-1zM532 552h1v1h-1zM532 533h1v1h-1zM532 514h1v1h-1zM532 495h1v1h-1zM532 477h1v1h-1zM532 458h1v1h-1zM532 439h1v1h-1zM532 420h1v1h-1zM532 402h1v1h-1zM532 383h1v1h-1zM532 364h1v1h-1zM532 345h1v1h-1zM532 326h1v1h-1zM532 308h1v1h-1zM532 289h1v1h-1zM532 270h1v1h-1zM532 251h1v1h-1zM532 232h1v1h-1zM532 214h1v1h-1zM532 195h1v1h-1zM532 176h1v1h-1zM532 157h1v1h-1zM532 139h1v1h-1zM532 120h1v1h-1zM551 1191h1v1h-1zM551 1172h1v1h-1zM551 1153h1v1h-1zM551 1134h1v1h-1zM551 1115h1v1h-1zM551 1097h1v1h-1zM551 1078h1v1h-1zM551 1059h1v1h-1zM551 1040h1v1h-1zM551 1021h1v1h-1zM551 1003h1v1h-1zM551 984h1v1h-1zM551 965h1v1h-1zM551 946h1v1h-1zM551 928h1v1h-1zM551 909h1v1h-1zM551 890h1v1h-1zM551 871h1v1h-1zM551 852h1v1h-1zM551 834h1v1h-1zM551 815h1v1h-1zM551 796h1v1h-1zM551 777h1v1h-1zM551 758h1v1h-1zM551 740h1v1h-1zM551 721h1v1h-1zM551 702h1v1h-1zM551 683h1v1h-1zM551 665h1v1h-1zM551 646h1v1h-1zM551 627h1v1h-1zM551 608h1v1h-1zM551 589h1v1h-1zM551 571h1v1h-1zM551 552h1v1h-1zM551 533h1v1h-1zM551 514h1v1h-1zM551 495h1v1h-1zM551 477h1v1h-1zM551 458h1v1h-1zM551 439h1v1h-1zM551 420h1v1h-1zM551 402h1v1h-1zM551 383h1v1h-1zM551 364h1v1h-1zM551 345h1v1h-1zM551 326h1v1h-1zM551 308h1v1h-1zM551 289h1v1h-1zM551 270h1v1h-1zM551 251h1v1h-1zM551 232h1v1h-1zM551 214h1v1h-1zM551 195h1v1h-1zM551 176h1v1h-1zM551 157h1v1h-1zM551 139h1v1h-1zM551 120h1v1h-1zM569 1191h1v1h-1zM569 1172h1v1h-1zM569 1153h1v1h-1zM569 1134h1v1h-1zM569 1115h1v1h-1zM569 1097h1v1h-1zM569 1078h1v1h-1zM569 1059h1v1h-1zM569 1040h1v1h-1zM569 1021h1v1h-1zM569 1003h1v1h-1zM569 984h1v1h-1zM569 965h1v1h-1zM569 946h1v1h-1zM569 928h1v1h-1zM569 909h1v1h-1zM569 890h1v1h-1zM569 871h1v1h-1zM569 852h1v1h-1zM569 834h1v1h-1zM569 815h1v1h-1zM569 796h1v1h-1zM569 777h1v1h-1zM569 758h1v1h-1zM569 740h1v1h-1zM569 721h1v1h-1zM569 702h1v1h-1zM569 683h1v1h-1zM569 665h1v1h-1zM569 646h1v1h-1zM569 627h1v1h-1zM569 608h1v1h-1zM569 589h1v1h-1zM569 571h1v1h-1zM569 552h1v1h-1zM569 533h1v1h-1zM569 514h1v1h-1zM569 495h1v1h-1zM569 477h1v1h-1zM569 458h1v1h-1zM569 439h1v1h-1zM569 420h1v1h-1zM569 402h1v1h-1zM569 383h1v1h-1zM569 364h1v1h-1zM569 345h1v1h-1zM569 326h1v1h-1zM569 308h1v1h-1zM569 289h1v1h-1zM569 270h1v1h-1zM569 251h1v1h-1zM569 232h1v1h-1zM569 214h1v1h-1zM569 195h1v1h-1zM569 176h1v1h-1zM569 157h1v1h-1zM569 139h1v1h-1zM569 120h1v1h-1zM588 1191h1v1h-1zM588 1172h1v1h-1zM588 1153h1v1h-1zM588 1134h1v1h-1zM588 1115h1v1h-1zM588 1097h1v1h-1zM588 1078h1v1h-1zM588 1059h1v1h-1zM588 1040h1v1h-1zM588 1021h1v1h-1zM588 1003h1v1h-1zM588 984h1v1h-1zM588 965h1v1h-1zM588 946h1v1h-1zM588 928h1v1h-1zM588 909h1v1h-1zM588 890h1v1h-1zM588 871h1v1h-1zM588 852h1v1h-1zM588 834h1v1h-1zM588 815h1v1h-1zM588 796h1v1h-1zM588 777h1v1h-1zM588 758h1v1h-1zM588 740h1v1h-1zM588 721h1v1h-1zM588 702h1v1h-1zM588 683h1v1h-1zM588 665h1v1h-1zM588 646h1v1h-1zM588 627h1v1h-1zM588 608h1v1h-1zM588 589h1v1h-1zM588 571h1v1h-1zM588 552h1v1h-1zM588 533h1v1h-1zM588 514h1v1h-1zM588 495h1v1h-1zM588 477h1v1h-1zM588 458h1v1h-1zM588 439h1v1h-1zM588 420h1v1h-1zM588 402h1v1h-1zM588 383h1v1h-1zM588 364h1v1h-1zM588 345h1v1h-1zM588 326h1v1h-1zM588 308h1v1h-1zM588 289h1v1h-1zM588 270h1v1h-1zM588 251h1v1h-1zM588 232h1v1h-1zM588 214h1v1h-1zM588 195h1v1h-1zM588 176h1v1h-1zM588 157h1v1h-1zM588 139h1v1h-1zM588 120h1v1h-1zM607 1191h1v1h-1zM607 1172h1v1h-1zM607 1153h1v1h-1zM607 1134h1v1h-1zM607 1115h1v1h-1zM607 1097h1v1h-1zM607 1078h1v1h-1zM607 1059h1v1h-1zM607 1040h1v1h-1zM607 1021h1v1h-1zM607 1003h1v1h-1zM607 984h1v1h-1zM607 965h1v1h-1zM607 946h1v1h-1zM607 928h1v1h-1zM607 909h1v1h-1zM607 890h1v1h-1zM607 871h1v1h-1zM607 852h1v1h-1zM607 834h1v1h-1zM607 815h1v1h-1zM607 796h1v1h-1zM607 777h1v1h-1zM607 758h1v1h-1zM607 740h1v1h-1zM607 721h1v1h-1zM607 702h1v1h-1zM607 683h1v1h-1zM607 665h1v1h-1zM607 646h1v1h-1zM607 627h1v1h-1zM607 608h1v1h-1zM607 589h1v1h-1zM607 571h1v1h-1zM607 552h1v1h-1zM607 533h1v1h-1zM607 514h1v1h-1zM607 495h1v1h-1zM607 477h1v1h-1zM607 458h1v1h-1zM607 439h1v1h-1zM607 420h1v1h-1zM607 402h1v1h-1zM607 383h1v1h-1zM607 364h1v1h-1zM607 345h1v1h-1zM607 326h1v1h-1zM607 308h1v1h-1zM607 289h1v1h-1zM607 270h1v1h-1zM607 251h1v1h-1zM607 232h1v1h-1zM607 214h1v1h-1zM607 195h1v1h-1zM607 176h1v1h-1zM607 157h1v1h-1zM607 139h1v1h-1zM607 120h1v1h-1zM626 1191h1v1h-1zM626 1172h1v1h-1zM626 1153h1v1h-1zM626 1134h1v1h-1zM626 1115h1v1h-1zM626 1097h1v1h-1zM626 1078h1v1h-1zM626 1059h1v1h-1zM626 1040h1v1h-1zM626 1021h1v1h-1zM626 1003h1v1h-1zM626 984h1v1h-1zM626 965h1v1h-1zM626 946h1v1h-1zM626 928h1v1h-1zM626 909h1v1h-1zM626 890h1v1h-1zM626 871h1v1h-1zM626 852h1v1h-1zM626 834h1v1h-1zM626 815h1v1h-1zM626 796h1v1h-1zM626 777h1v1h-1zM626 758h1v1h-1zM626 740h1v1h-1zM626 721h1v1h-1zM626 702h1v1h-1zM626 683h1v1h-1zM626 665h1v1h-1zM626 646h1v1h-1zM626 627h1v1h-1zM626 608h1v1h-1zM626 589h1v1h-1zM626 571h1v1h-1zM626 552h1v1h-1zM626 533h1v1h-1zM626 514h1v1h-1zM626 495h1v1h-1zM626 477h1v1h-1zM626 458h1v1h-1zM626 439h1v1h-1zM626 420h1v1h-1zM626 402h1v1h-1zM626 383h1v1h-1zM626 364h1v1h-1zM626 345h1v1h-1zM626 326h1v1h-1zM626 308h1v1h-1zM626 289h1v1h-1zM626 270h1v1h-1zM626 251h1v1h-1zM626 232h1v1h-1zM626 214h1v1h-1zM626 195h1v1h-1zM626 176h1v1h-1zM626 157h1v1h-1zM626 139h1v1h-1zM626 120h1v1h-1zM645 1191h1v1h-1zM645 1172h1v1h-1zM645 1153h1v1h-1zM645 1134h1v1h-1zM645 1115h1v1h-1zM645 1097h1v1h-1zM645 1078h1v1h-1zM645 1059h1v1h-1zM645 1040h1v1h-1zM645 1021h1v1h-1zM645 1003h1v1h-1zM645 984h1v1h-1zM645 965h1v1h-1zM645 946h1v1h-1zM645 928h1v1h-1zM645 909h1v1h-1zM645 890h1v1h-1zM645 871h1v1h-1zM645 852h1v1h-1zM645 834h1v1h-1zM645 815h1v1h-1zM645 796h1v1h-1zM645 777h1v1h-1zM645 758h1v1h-1zM645 740h1v1h-1zM645 721h1v1h-1zM645 702h1v1h-1zM645 683h1v1h-1zM645 665h1v1h-1zM645 646h1v1h-1zM645 627h1v1h-1zM645 608h1v1h-1zM645 589h1v1h-1zM645 571h1v1h-1zM645 552h1v1h-1zM645 533h1v1h-1zM645 514h1v1h-1zM645 495h1v1h-1zM645 477h1v1h-1zM645 458h1v1h-1zM645 439h1v1h-1zM645 420h1v1h-1zM645 402h1v1h-1zM645 383h1v1h-1zM645 364h1v1h-1zM645 345h1v1h-1zM645 326h1v1h-1zM645 308h1v1h-1zM645 289h1v1h-1zM645 270h1v1h-1zM645 251h1v1h-1zM645 232h1v1h-1zM645 214h1v1h-1zM645 195h1v1h-1zM645 176h1v1h-1zM645 157h1v1h-1zM645 139h1v1h-1zM645 120h1v1h-1zM663 1191h1v1h-1zM663 1172h1v1h-1zM663 1153h1v1h-1zM663 1134h1v1h-1zM663 1115h1v1h-1zM663 1097h1v1h-1zM663 1078h1v1h-1zM663 1059h1v1h-1zM663 1040h1v1h-1zM663 1021h1v1h-1zM663 1003h1v1h-1zM663 984h1v1h-1zM663 965h1v1h-1zM663 946h1v1h-1zM663 928h1v1h-1zM663 909h1v1h-1zM663 890h1v1h-1zM663 871h1v1h-1zM663 852h1v1h-1zM663 834h1v1h-1zM663 815h1v1h-1zM663 796h1v1h-1zM663 777h1v1h-1zM663 758h1v1h-1zM663 740h1v1h-1zM663 721h1v1h-1zM663 702h1v1h-1zM663 683h1v1h-1zM663 665h1v1h-1zM663 646h1v1h-1zM663 627h1v1h-1zM663 608h1v1h-1zM663 589h1v1h-1zM663 571h1v1h-1zM663 552h1v1h-1zM663 533h1v1h-1zM663 514h1v1h-1zM663 495h1v1h-1zM663 477h1v1h-1zM663 458h1v1h-1zM663 439h1v1h-1zM663 420h1v1h-1zM663 402h1v1h-1zM663 383h1v1h-1zM663 364h1v1h-1zM663 345h1v1h-1zM663 326h1v1h-1zM663 308h1v1h-1zM663 289h1v1h-1zM663 270h1v1h-1zM663 251h1v1h-1zM663 232h1v1h-1zM663 214h1v1h-1zM663 195h1v1h-1zM663 176h1v1h-1zM663 157h1v1h-1zM663 139h1v1h-1zM663 120h1v1h-1zM682 1191h1v1h-1zM682 1172h1v1h-1zM682 1153h1v1h-1zM682 1134h1v1h-1zM682 1115h1v1h-1zM682 1097h1v1h-1zM682 1078h1v1h-1zM682 1059h1v1h-1zM682 1040h1v1h-1zM682 1021h1v1h-1zM682 1003h1v1h-1zM682 984h1v1h-1zM682 965h1v1h-1zM682 946h1v1h-1zM682 928h1v1h-1zM682 909h1v1h-1zM682 890h1v1h-1zM682 871h1v1h-1zM682 852h1v1h-1zM682 834h1v1h-1zM682 815h1v1h-1zM682 796h1v1h-1zM682 777h1v1h-1zM682 758h1v1h-1zM682 740h1v1h-1zM682 721h1v1h-1zM682 702h1v1h-1zM682 683h1v1h-1zM682 665h1v1h-1zM682 646h1v1h-1zM682 627h1v1h-1zM682 608h1v1h-1zM682 589h1v1h-1zM682 571h1v1h-1zM682 552h1v1h-1zM682 533h1v1h-1zM682 514h1v1h-1zM682 495h1v1h-1zM682 477h1v1h-1zM682 458h1v1h-1zM682 439h1v1h-1zM682 420h1v1h-1zM682 402h1v1h-1zM682 383h1v1h-1zM682 364h1v1h-1zM682 345h1v1h-1zM682 326h1v1h-1zM682 308h1v1h-1zM682 289h1v1h-1zM682 270h1v1h-1zM682 251h1v1h-1zM682 232h1v1h-1zM682 214h1v1h-1zM682 195h1v1h-1zM682 176h1v1h-1zM682 157h1v1h-1zM682 139h1v1h-1zM682 120h1v1h-1zM701 1191h1v1h-1zM701 1172h1v1h-1zM701 1153h1v1h-1zM701 1134h1v1h-1zM701 1115h1v1h-1zM701 1097h1v1h-1zM701 1078h1v1h-1zM701 1059h1v1h-1zM701 1040h1v1h-1zM701 1021h1v1h-1zM701 1003h1v1h-1zM701 984h1v1h-1zM701 965h1v1h-1zM701 946h1v1h-1zM701 928h1v1h-1zM701 909h1v1h-1zM701 890h1v1h-1zM701 871h1v1h-1zM701 852h1v1h-1zM701 834h1v1h-1zM701 815h1v1h-1zM701 796h1v1h-1zM701 777h1v1h-1zM701 758h1v1h-1zM701 740h1v1h-1zM701 721h1v1h-1zM701 702h1v1h-1zM701 683h1v1h-1zM701 665h1v1h-1zM701 646h1v1h-1zM701 627h1v1h-1zM701 608h1v1h-1zM701 589h1v1h-1zM701 571h1v1h-1zM701 552h1v1h-1zM701 533h1v1h-1zM701 514h1v1h-1zM701 495h1v1h-1zM701 477h1v1h-1zM701 458h1v1h-1zM701 439h1v1h-1zM701 420h1v1h-1zM701 402h1v1h-1zM701 383h1v1h-1zM701 364h1v1h-1zM701 345h1v1h-1zM701 326h1v1h-1zM701 308h1v1h-1zM701 289h1v1h-1zM701 270h1v1h-1zM701 251h1v1h-1zM701 232h1v1h-1zM701 214h1v1h-1zM701 195h1v1h-1zM701 176h1v1h-1zM701 157h1v1h-1zM701 139h1v1h-1zM701 120h1v1h-1zM720 1191h1v1h-1zM720 1172h1v1h-1zM720 1153h1v1h-1zM720 1134h1v1h-1zM720 1115h1v1h-1zM720 1097h1v1h-1zM720 1078h1v1h-1zM720 1059h1v1h-1zM720 1040h1v1h-1zM720 1021h1v1h-1zM720 1003h1v1h-1zM720 984h1v1h-1zM720 965h1v1h-1zM720 946h1v1h-1zM720 928h1v1h-1zM720 909h1v1h-1zM720 890h1v1h-1zM720 871h1v1h-1zM720 852h1v1h-1zM720 834h1v1h-1zM720 815h1v1h-1zM720 796h1v1h-1zM720 777h1v1h-1zM720 758h1v1h-1zM720 740h1v1h-1zM720 721h1v1h-1zM720 702h1v1h-1zM720 683h1v1h-1zM720 665h1v1h-1zM720 646h1v1h-1zM720 627h1v1h-1zM720 608h1v1h-1zM720 589h1v1h-1zM720 571h1v1h-1zM720 552h1v1h-1zM720 533h1v1h-1zM720 514h1v1h-1zM720 495h1v1h-1zM720 477h1v1h-1zM720 458h1v1h-1zM720 439h1v1h-1zM720 420h1v1h-1zM720 402h1v1h-1zM720 383h1v1h-1zM720 364h1v1h-1zM720 345h1v1h-1zM720 326h1v1h-1zM720 308h1v1h-1zM720 289h1v1h-1zM720 270h1v1h-1zM720 251h1v1h-1zM720 232h1v1h-1zM720 214h1v1h-1zM720 195h1v1h-1zM720 176h1v1h-1zM720 157h1v1h-1zM720 139h1v1h-1zM720 120h1v1h-1zM738 1191h1v1h-1zM738 1172h1v1h-1zM738 1153h1v1h-1zM738 1134h1v1h-1zM738 1115h1v1h-1zM738 1097h1v1h-1zM738 1078h1v1h-1zM738 1059h1v1h-1zM738 1040h1v1h-1zM738 1021h1v1h-1zM738 1003h1v1h-1zM738 984h1v1h-1zM738 965h1v1h-1zM738 946h1v1h-1zM738 928h1v1h-1zM738 909h1v1h-1zM738 890h1v1h-1zM738 871h1v1h-1zM738 852h1v1h-1zM738 834h1v1h-1zM738 815h1v1h-1zM738 796h1v1h-1zM738 777h1v1h-1zM738 758h1v1h-1zM738 740h1v1h-1zM738 721h1v1h-1zM738 702h1v1h-1zM738 683h1v1h-1zM738 665h1v1h-1zM738 646h1v1h-1zM738 627h1v1h-1zM738 608h1v1h-1zM738 589h1v1h-1zM738 571h1v1h-1zM738 552h1v1h-1zM738 533h1v1h-1zM738 514h1v1h-1zM738 495h1v1h-1zM738 477h1v1h-1zM738 458h1v1h-1zM738 439h1v1h-1zM738 420h1v1h-1zM738 402h1v1h-1zM738 383h1v1h-1zM738 364h1v1h-1zM738 345h1v1h-1zM738 326h1v1h-1zM738 308h1v1h-1zM738 289h1v1h-1zM738 270h1v1h-1zM738 251h1v1h-1zM738 232h1v1h-1zM738 214h1v1h-1zM738 195h1v1h-1zM738 176h1v1h-1zM738 157h1v1h-1zM738 139h1v1h-1zM738 120h1v1h-1zM757 1191h1v1h-1zM757 1172h1v1h-1zM757 1153h1v1h-1zM757 1134h1v1h-1zM757 1115h1v1h-1zM757 1097h1v1h-1zM757 1078h1v1h-1zM757 1059h1v1h-1zM757 1040h1v1h-1zM757 1021h1v1h-1zM757 1003h1v1h-1zM757 984h1v1h-1zM757 965h1v1h-1zM757 946h1v1h-1zM757 928h1v1h-1zM757 909h1v1h-1zM757 890h1v1h-1zM757 871h1v1h-1zM757 852h1v1h-1zM757 834h1v1h-1zM757 815h1v1h-1zM757 796h1v1h-1zM757 777h1v1h-1zM757 758h1v1h-1zM757 740h1v1h-1zM757 721h1v1h-1zM757 702h1v1h-1zM757 683h1v1h-1zM757 665h1v1h-1zM757 646h1v1h-1zM757 627h1v1h-1zM757 608h1v1h-1zM757 589h1v1h-1zM757 571h1v1h-1zM757 552h1v1h-1zM757 533h1v1h-1zM757 514h1v1h-1zM757 495h1v1h-1zM757 477h1v1h-1zM757 458h1v1h-1zM757 439h1v1h-1zM757 420h1v1h-1zM757 402h1v1h-1zM757 383h1v1h-1zM757 364h1v1h-1zM757 345h1v1h-1zM757 326h1v1h-1zM757 308h1v1h-1zM757 289h1v1h-1zM757 270h1v1h-1zM757 251h1v1h-1zM757 232h1v1h-1zM757 214h1v1h-1zM757 195h1v1h-1zM757 176h1v1h-1zM757 157h1v1h-1zM757 139h1v1h-1zM757 120h1v1h-1zM776 1191h1v1h-1zM776 1172h1v1h-1zM776 1153h1v1h-1zM776 1134h1v1h-1zM776 1115h1v1h-1zM776 1097h1v1h-1zM776 1078h1v1h-1zM776 1059h1v1h-1zM776 1040h1v1h-1zM776 1021h1v1h-1zM776 1003h1v1h-1zM776 984h1v1h-1zM776 965h1v1h-1zM776 946h1v1h-1zM776 928h1v1h-1zM776 909h1v1h-1zM776 890h1v1h-1zM776 871h1v1h-1zM776 852h1v1h-1zM776 834h1v1h-1zM776 815h1v1h-1zM776 796h1v1h-1zM776 777h1v1h-1zM776 758h1v1h-1zM776 740h1v1h-1zM776 721h1v1h-1zM776 702h1v1h-1zM776 683h1v1h-1zM776 665h1v1h-1zM776 646h1v1h-1zM776 627h1v1h-1zM776 608h1v1h-1zM776 589h1v1h-1zM776 571h1v1h-1zM776 552h1v1h-1zM776 533h1v1h-1zM776 514h1v1h-1zM776 495h1v1h-1zM776 477h1v1h-1zM776 458h1v1h-1zM776 439h1v1h-1zM776 420h1v1h-1zM776 402h1v1h-1zM776 383h1v1h-1zM776 364h1v1h-1zM776 345h1v1h-1zM776 326h1v1h-1zM776 308h1v1h-1zM776 289h1v1h-1zM776 270h1v1h-1zM776 251h1v1h-1zM776 232h1v1h-1zM776 214h1v1h-1zM776 195h1v1h-1zM776 176h1v1h-1zM776 157h1v1h-1zM776 139h1v1h-1zM776 120h1v1h-1zM795 1191h1v1h-1zM795 1172h1v1h-1zM795 1153h1v1h-1zM795 1134h1v1h-1zM795 1115h1v1h-1zM795 1097h1v1h-1zM795 1078h1v1h-1zM795 1059h1v1h-1zM795 1040h1v1h-1zM795 1021h1v1h-1zM795 1003h1v1h-1zM795 984h1v1h-1zM795 965h1v1h-1zM795 946h1v1h-1zM795 928h1v1h-1zM795 909h1v1h-1zM795 890h1v1h-1zM795 871h1v1h-1zM795 852h1v1h-1zM795 834h1v1h-1zM795 815h1v1h-1zM795 796h1v1h-1zM795 777h1v1h-1zM795 758h1v1h-1zM795 740h1v1h-1zM795 721h1v1h-1zM795 702h1v1h-1zM795 683h1v1h-1zM795 665h1v1h-1zM795 646h1v1h-1zM795 627h1v1h-1zM795 608h1v1h-1zM795 589h1v1h-1zM795 571h1v1h-1zM795 552h1v1h-1zM795 533h1v1h-1zM795 514h1v1h-1zM795 495h1v1h-1zM795 477h1v1h-1zM795 458h1v1h-1zM795 439h1v1h-1zM795 420h1v1h-1zM795 402h1v1h-1zM795 383h1v1h-1zM795 364h1v1h-1zM795 345h1v1h-1zM795 326h1v1h-1zM795 308h1v1h-1zM795 289h1v1h-1zM795 270h1v1h-1zM795 251h1v1h-1zM795 232h1v1h-1zM795 214h1v1h-1zM795 195h1v1h-1zM795 176h1v1h-1zM795 157h1v1h-1zM795 139h1v1h-1zM795 120h1v1h-1zM814 1191h1v1h-1zM814 1172h1v1h-1zM814 1153h1v1h-1zM814 1134h1v1h-1zM814 1115h1v1h-1zM814 1097h1v1h-1zM814 1078h1v1h-1zM814 1059h1v1h-1zM814 1040h1v1h-1zM814 1021h1v1h-1zM814 1003h1v1h-1zM814 984h1v1h-1zM814 965h1v1h-1zM814 946h1v1h-1zM814 928h1v1h-1zM814 909h1v1h-1zM814 890h1v1h-1zM814 871h1v1h-1zM814 852h1v1h-1zM814 834h1v1h-1zM814 815h1v1h-1zM814 796h1v1h-1zM814 777h1v1h-1zM814 758h1v1h-1zM814 740h1v1h-1zM814 721h1v1h-1zM814 702h1v1h-1zM814 683h1v1h-1zM814 665h1v1h-1zM814 646h1v1h-1zM814 627h1v1h-1zM814 608h1v1h-1zM814 589h1v1h-1zM814 571h1v1h-1zM814 552h1v1h-1zM814 533h1v1h-1zM814 514h1v1h-1zM814 495h1v1h-1zM814 477h1v1h-1zM814 458h1v1h-1zM814 439h1v1h-1zM814 420h1v1h-1zM814 402h1v1h-1zM814 383h1v1h-1zM814 364h1v1h-1zM814 345h1v1h-1zM814 326h1v1h-1zM814 308h1v1h-1zM814 289h1v1h-1zM814 270h1v1h-1zM814 251h1v1h-1zM814 232h1v1h-1zM814 214h1v1h-1zM814 195h1v1h-1zM814 176h1v1h-1zM814 157h1v1h-1zM814 139h1v1h-1zM814 120h1v1h-1zM832 1191h1v1h-1zM832 1172h1v1h-1zM832 1153h1v1h-1zM832 1134h1v1h-1zM832 1115h1v1h-1zM832 1097h1v1h-1zM832 1078h1v1h-1zM832 1059h1v1h-1zM832 1040h1v1h-1zM832 1021h1v1h-1zM832 1003h1v1h-1zM832 984h1v1h-1zM832 965h1v1h-1zM832 946h1v1h-1zM832 928h1v1h-1zM832 909h1v1h-1zM832 890h1v1h-1zM832 871h1v1h-1zM832 852h1v1h-1zM832 834h1v1h-1zM832 815h1v1h-1zM832 796h1v1h-1zM832 777h1v1h-1zM832 758h1v1h-1zM832 740h1v1h-1zM832 721h1v1h-1zM832 702h1v1h-1zM832 683h1v1h-1zM832 665h1v1h-1zM832 646h1v1h-1zM832 627h1v1h-1zM832 608h1v1h-1zM832 589h1v1h-1zM832 571h1v1h-1zM832 552h1v1h-1zM832 533h1v1h-1zM832 514h1v1h-1zM832 495h1v1h-1zM832 477h1v1h-1zM832 458h1v1h-1zM832 439h1v1h-1zM832 420h1v1h-1zM832 402h1v1h-1zM832 383h1v1h-1zM832 364h1v1h-1zM832 345h1v1h-1zM832 326h1v1h-1zM832 308h1v1h-1zM832 289h1v1h-1zM832 270h1v1h-1zM832 251h1v1h-1zM832 232h1v1h-1zM832 214h1v1h-1zM832 195h1v1h-1zM832 176h1v1h-1zM832 157h1v1h-1zM832 139h1v1h-1zM832 120h1v1h-1zM851 1191h1v1h-1zM851 1172h1v1h-1zM851 1153h1v1h-1zM851 1134h1v1h-1zM851 1115h1v1h-1zM851 1097h1v1h-1zM851 1078h1v1h-1zM851 1059h1v1h-1zM851 1040h1v1h-1zM851 1021h1v1h-1zM851 1003h1v1h-1zM851 984h1v1h-1zM851 965h1v1h-1zM851 946h1v1h-1zM851 928h1v1h-1zM851 909h1v1h-1zM851 890h1v1h-1zM851 871h1v1h-1zM851 852h1v1h-1zM851 834h1v1h-1zM851 815h1v1h-1zM851 796h1v1h-1zM851 777h1v1h-1zM851 758h1v1h-1zM851 740h1v1h-1zM851 721h1v1h-1zM851 702h1v1h-1zM851 683h1v1h-1zM851 665h1v1h-1zM851 646h1v1h-1zM851 627h1v1h-1zM851 608h1v1h-1zM851 589h1v1h-1zM851 571h1v1h-1zM851 552h1v1h-1zM851 533h1v1h-1zM851 514h1v1h-1zM851 495h1v1h-1zM851 477h1v1h-1zM851 458h1v1h-1zM851 439h1v1h-1zM851 420h1v1h-1zM851 402h1v1h-1zM851 383h1v1h-1zM851 364h1v1h-1zM851 345h1v1h-1zM851 326h1v1h-1zM851 308h1v1h-1zM851 289h1v1h-1zM851 270h1v1h-1zM851 251h1v1h-1zM851 232h1v1h-1zM851 214h1v1h-1zM851 195h1v1h-1zM851 176h1v1h-1zM851 157h1v1h-1zM851 139h1v1h-1zM851 120h1v1h-1zM870 1191h1v1h-1zM870 1172h1v1h-1zM870 1153h1v1h-1zM870 1134h1v1h-1zM870 1115h1v1h-1zM870 1097h1v1h-1zM870 1078h1v1h-1zM870 1059h1v1h-1zM870 1040h1v1h-1zM870 1021h1v1h-1zM870 1003h1v1h-1zM870 984h1v1h-1zM870 965h1v1h-1zM870 946h1v1h-1zM870 928h1v1h-1zM870 909h1v1h-1zM870 890h1v1h-1zM870 871h1v1h-1zM870 852h1v1h-1zM870 834h1v1h-1zM870 815h1v1h-1zM870 796h1v1h-1zM870 777h1v1h-1zM870 758h1v1h-1zM870 740h1v1h-1zM870 721h1v1h-1zM870 702h1v1h-1zM870 683h1v1h-1zM870 665h1v1h-1zM870 646h1v1h-1zM870 627h1v1h-1zM870 608h1v1h-1zM870 589h1v1h-1zM870 571h1v1h-1zM870 552h1v1h-1zM870 533h1v1h-1zM870 514h1v1h-1zM870 495h1v1h-1zM870 477h1v1h-1zM870 458h1v1h-1zM870 439h1v1h-1zM870 420h1v1h-1zM870 402h1v1h-1zM870 383h1v1h-1zM870 364h1v1h-1zM870 345h1v1h-1zM870 326h1v1h-1zM870 308h1v1h-1zM870 289h1v1h-1zM870 270h1v1h-1zM870 251h1v1h-1zM870 232h1v1h-1zM870 214h1v1h-1zM870 195h1v1h-1zM870 176h1v1h-1zM870 157h1v1h-1zM870 139h1v1h-1zM870 120h1v1h-1zM889 1191h1v1h-1zM889 1172h1v1h-1zM889 1153h1v1h-1zM889 1134h1v1h-1zM889 1115h1v1h-1zM889 1097h1v1h-1zM889 1078h1v1h-1zM889 1059h1v1h-1zM889 1040h1v1h-1zM889 1021h1v1h-1zM889 1003h1v1h-1zM889 984h1v1h-1zM889 965h1v1h-1zM889 946h1v1h-1zM889 928h1v1h-1zM889 909h1v1h-1zM889 890h1v1h-1zM889 871h1v1h-1zM889 852h1v1h-1zM889 834h1v1h-1zM889 815h1v1h-1zM889 796h1v1h-1zM889 777h1v1h-1zM889 758h1v1h-1zM889 740h1v1h-1zM889 721h1v1h-1zM889 702h1v1h-1zM889 683h1v1h-1zM889 665h1v1h-1zM889 646h1v1h-1zM889 627h1v1h-1zM889 608h1v1h-1zM889 589h1v1h-1zM889 571h1v1h-1zM889 552h1v1h-1zM889 533h1v1h-1zM889 514h1v1h-1zM889 495h1v1h-1zM889 477h1v1h-1zM889 458h1v1h-1zM889 439h1v1h-1zM889 420h1v1h-1zM889 402h1v1h-1zM889 383h1v1h-1zM889 364h1v1h-1zM889 345h1v1h-1zM889 326h1v1h-1zM889 308h1v1h-1zM889 289h1v1h-1zM889 270h1v1h-1zM889 251h1v1h-1zM889 232h1v1h-1zM889 214h1v1h-1zM889 195h1v1h-1zM889 176h1v1h-1zM889 157h1v1h-1zM889 139h1v1h-1zM889 120h1v1h-1zM908 1191h1v1h-1zM908 1172h1v1h-1zM908 1153h1v1h-1zM908 1134h1v1h-1zM908 1115h1v1h-1zM908 1097h1v1h-1zM908 1078h1v1h-1zM908 1059h1v1h-1zM908 1040h1v1h-1zM908 1021h1v1h-1zM908 1003h1v1h-1zM908 984h1v1h-1zM908 965h1v1h-1zM908 946h1v1h-1zM908 928h1v1h-1zM908 909h1v1h-1zM908 890h1v1h-1zM908 871h1v1h-1zM908 852h1v1h-1zM908 834h1v1h-1zM908 815h1v1h-1zM908 796h1v1h-1zM908 777h1v1h-1zM908 758h1v1h-1zM908 740h1v1h-1zM908 721h1v1h-1zM908 702h1v1h-1zM908 683h1v1h-1zM908 665h1v1h-1zM908 646h1v1h-1zM908 627h1v1h-1zM908 608h1v1h-1zM908 589h1v1h-1zM908 571h1v1h-1zM908 552h1v1h-1zM908 533h1v1h-1zM908 514h1v1h-1zM908 495h1v1h-1zM908 477h1v1h-1zM908 458h1v1h-1zM908 439h1v1h-1zM908 420h1v1h-1zM908 402h1v1h-1zM908 383h1v1h-1zM908 364h1v1h-1zM908 345h1v1h-1zM908 326h1v1h-1zM908 308h1v1h-1zM908 289h1v1h-1zM908 270h1v1h-1zM908 251h1v1h-1zM908 232h1v1h-1zM908 214h1v1h-1zM908 195h1v1h-1zM908 176h1v1h-1zM908 157h1v1h-1zM908 139h1v1h-1zM908 120h1v1h-1zM926 1191h1v1h-1zM926 1172h1v1h-1zM926 1153h1v1h-1zM926 1134h1v1h-1zM926 1115h1v1h-1zM926 1097h1v1h-1zM926 1078h1v1h-1zM926 1059h1v1h-1zM926 1040h1v1h-1zM926 1021h1v1h-1zM926 1003h1v1h-1zM926 984h1v1h-1zM926 965h1v1h-1zM926 946h1v1h-1zM926 928h1v1h-1zM926 909h1v1h-1zM926 890h1v1h-1zM926 871h1v1h-1zM926 852h1v1h-1zM926 834h1v1h-1zM926 815h1v1h-1zM926 796h1v1h-1zM926 777h1v1h-1zM926 758h1v1h-1zM926 740h1v1h-1zM926 721h1v1h-1zM926 702h1v1h-1zM926 683h1v1h-1zM926 665h1v1h-1zM926 646h1v1h-1zM926 627h1v1h-1zM926 608h1v1h-1zM926 589h1v1h-1zM926 571h1v1h-1zM926 552h1v1h-1zM926 533h1v1h-1zM926 514h1v1h-1zM926 495h1v1h-1zM926 477h1v1h-1zM926 458h1v1h-1zM926 439h1v1h-1zM926 420h1v1h-1zM926 402h1v1h-1zM926 383h1v1h-1zM926 364h1v1h-1zM926 345h1v1h-1zM926 326h1v1h-1zM926 308h1v1h-1zM926 289h1v1h-1zM926 270h1v1h-1zM926 251h1v1h-1zM926 232h1v1h-1zM926 214h1v1h-1zM926 195h1v1h-1zM926 176h1v1h-1zM926 157h1v1h-1zM926 139h1v1h-1zM926 120h1v1h-1zM945 1191h1v1h-1zM945 1172h1v1h-1zM945 1153h1v1h-1zM945 1134h1v1h-1zM945 1115h1v1h-1zM945 1097h1v1h-1zM945 1078h1v1h-1zM945 1059h1v1h-1zM945 1040h1v1h-1zM945 1021h1v1h-1zM945 1003h1v1h-1zM945 984h1v1h-1zM945 965h1v1h-1zM945 946h1v1h-1zM945 928h1v1h-1zM945 909h1v1h-1zM945 890h1v1h-1zM945 871h1v1h-1zM945 852h1v1h-1zM945 834h1v1h-1zM945 815h1v1h-1zM945 796h1v1h-1zM945 777h1v1h-1zM945 758h1v1h-1zM945 740h1v1h-1zM945 721h1v1h-1zM945 702h1v1h-1zM945 683h1v1h-1zM945 665h1v1h-1zM945 646h1v1h-1zM945 627h1v1h-1zM945 608h1v1h-1zM945 589h1v1h-1zM945 571h1v1h-1zM945 552h1v1h-1zM945 533h1v1h-1zM945 514h1v1h-1zM945 495h1v1h-1zM945 477h1v1h-1zM945 458h1v1h-1zM945 439h1v1h-1zM945 420h1v1h-1zM945 402h1v1h-1zM945 383h1v1h-1zM945 364h1v1h-1zM945 345h1v1h-1zM945 326h1v1h-1zM945 308h1v1h-1zM945 289h1v1h-1zM945 270h1v1h-1zM945 251h1v1h-1zM945 232h1v1h-1zM945 214h1v1h-1zM945 195h1v1h-1zM945 176h1v1h-1zM945 157h1v1h-1zM945 139h1v1h-1zM945 120h1v1h-1zM964 1191h1v1h-1zM964 1172h1v1h-1zM964 1153h1v1h-1zM964 1134h1v1h-1zM964 1115h1v1h-1zM964 1097h1v1h-1zM964 1078h1v1h-1zM964 1059h1v1h-1zM964 1040h1v1h-1zM964 1021h1v1h-1zM964 1003h1v1h-1zM964 984h1v1h-1zM964 965h1v1h-1zM964 946h1v1h-1zM964 928h1v1h-1zM964 909h1v1h-1zM964 890h1v1h-1zM964 871h1v1h-1zM964 852h1v1h-1zM964 834h1v1h-1zM964 815h1v1h-1zM964 796h1v1h-1zM964 777h1v1h-1zM964 758h1v1h-1zM964 740h1v1h-1zM964 721h1v1h-1zM964 702h1v1h-1zM964 683h1v1h-1zM964 665h1v1h-1zM964 646h1v1h-1zM964 627h1v1h-1zM964 608h1v1h-1zM964 589h1v1h-1zM964 571h1v1h-1zM964 552h1v1h-1zM964 533h1v1h-1zM964 514h1v1h-1zM964 495h1v1h-1zM964 477h1v1h-1zM964 458h1v1h-1zM964 439h1v1h-1zM964 420h1v1h-1zM964 402h1v1h-1zM964 383h1v1h-1zM964 364h1v1h-1zM964 345h1v1h-1zM964 326h1v1h-1zM964 308h1v1h-1zM964 289h1v1h-1zM964 270h1v1h-1zM964 251h1v1h-1zM964 232h1v1h-1zM964 214h1v1h-1zM964 195h1v1h-1zM964 176h1v1h-1zM964 157h1v1h-1zM964 139h1v1h-1zM964 120h1v1h-1zM983 1191h1v1h-1zM983 1172h1v1h-1zM983 1153h1v1h-1zM983 1134h1v1h-1zM983 1115h1v1h-1zM983 1097h1v1h-1zM983 1078h1v1h-1zM983 1059h1v1h-1zM983 1040h1v1h-1zM983 1021h1v1h-1zM983 1003h1v1h-1zM983 984h1v1h-1zM983 965h1v1h-1zM983 946h1v1h-1zM983 928h1v1h-1zM983 909h1v1h-1zM983 890h1v1h-1zM983 871h1v1h-1zM983 852h1v1h-1zM983 834h1v1h-1zM983 815h1v1h-1zM983 796h1v1h-1zM983 777h1v1h-1zM983 758h1v1h-1zM983 740h1v1h-1zM983 721h1v1h-1zM983 702h1v1h-1zM983 683h1v1h-1zM983 665h1v1h-1zM983 646h1v1h-1zM983 627h1v1h-1zM983 608h1v1h-1zM983 589h1v1h-1zM983 571h1v1h-1zM983 552h1v1h-1zM983 533h1v1h-1zM983 514h1v1h-1zM983 495h1v1h-1zM983 477h1v1h-1zM983 458h1v1h-1zM983 439h1v1h-1zM983 420h1v1h-1zM983 402h1v1h-1zM983 383h1v1h-1zM983 364h1v1h-1zM983 345h1v1h-1zM983 326h1v1h-1zM983 308h1v1h-1zM983 289h1v1h-1zM983 270h1v1h-1zM983 251h1v1h-1zM983 232h1v1h-1zM983 214h1v1h-1zM983 195h1v1h-1zM983 176h1v1h-1zM983 157h1v1h-1zM983 139h1v1h-1zM983 120h1v1h-1zM1001 1191h1v1h-1zM1001 1172h1v1h-1zM1001 1153h1v1h-1zM1001 1134h1v1h-1zM1001 1115h1v1h-1zM1001 1097h1v1h-1zM1001 1078h1v1h-1zM1001 1059h1v1h-1zM1001 1040h1v1h-1zM1001 1021h1v1h-1zM1001 1003h1v1h-1zM1001 984h1v1h-1zM1001 965h1v1h-1zM1001 946h1v1h-1zM1001 928h1v1h-1zM1001 909h1v1h-1zM1001 890h1v1h-1zM1001 871h1v1h-1zM1001 852h1v1h-1zM1001 834h1v1h-1zM1001 815h1v1h-1zM1001 796h1v1h-1zM1001 777h1v1h-1zM1001 758h1v1h-1zM1001 740h1v1h-1zM1001 721h1v1h-1zM1001 702h1v1h-1zM1001 683h1v1h-1zM1001 665h1v1h-1zM1001 646h1v1h-1zM1001 627h1v1h-1zM1001 608h1v1h-1zM1001 589h1v1h-1zM1001 571h1v1h-1zM1001 552h1v1h-1zM1001 533h1v1h-1zM1001 514h1v1h-1zM1001 495h1v1h-1zM1001 477h1v1h-1zM1001 458h1v1h-1zM1001 439h1v1h-1zM1001 420h1v1h-1zM1001 402h1v1h-1zM1001 383h1v1h-1zM1001 364h1v1h-1zM1001 345h1v1h-1zM1001 326h1v1h-1zM1001 308h1v1h-1zM1001 289h1v1h-1zM1001 270h1v1h-1zM1001 251h1v1h-1zM1001 232h1v1h-1zM1001 214h1v1h-1zM1001 195h1v1h-1zM1001 176h1v1h-1zM1001 157h1v1h-1zM1001 139h1v1h-1zM1001 120h1v1h-1zM1020 1191h1v1h-1zM1020 1172h1v1h-1zM1020 1153h1v1h-1zM1020 1134h1v1h-1zM1020 1115h1v1h-1zM1020 1097h1v1h-1zM1020 1078h1v1h-1zM1020 1059h1v1h-1zM1020 1040h1v1h-1zM1020 1021h1v1h-1zM1020 1003h1v1h-1zM1020 984h1v1h-1zM1020 965h1v1h-1zM1020 946h1v1h-1zM1020 928h1v1h-1zM1020 909h1v1h-1zM1020 890h1v1h-1zM1020 871h1v1h-1zM1020 852h1v1h-1zM1020 834h1v1h-1zM1020 815h1v1h-1zM1020 796h1v1h-1zM1020 777h1v1h-1zM1020 758h1v1h-1zM1020 740h1v1h-1zM1020 721h1v1h-1zM1020 702h1v1h-1zM1020 683h1v1h-1zM1020 665h1v1h-1zM1020 646h1v1h-1zM1020 627h1v1h-1zM1020 608h1v1h-1zM1020 589h1v1h-1zM1020 571h1v1h-1zM1020 552h1v1h-1zM1020 533h1v1h-1zM1020 514h1v1h-1zM1020 495h1v1h-1zM1020 477h1v1h-1zM1020 458h1v1h-1zM1020 439h1v1h-1zM1020 420h1v1h-1zM1020 402h1v1h-1zM1020 383h1v1h-1zM1020 364h1v1h-1zM1020 345h1v1h-1zM1020 326h1v1h-1zM1020 308h1v1h-1zM1020 289h1v1h-1zM1020 270h1v1h-1zM1020 251h1v1h-1zM1020 232h1v1h-1zM1020 214h1v1h-1zM1020 195h1v1h-1zM1020 176h1v1h-1zM1020 157h1v1h-1zM1020 139h1v1h-1zM1020 120h1v1h-1zM1039 1191h1v1h-1zM1039 1172h1v1h-1zM1039 1153h1v1h-1zM1039 1134h1v1h-1zM1039 1115h1v1h-1zM1039 1097h1v1h-1zM1039 1078h1v1h-1zM1039 1059h1v1h-1zM1039 1040h1v1h-1zM1039 1021h1v1h-1zM1039 1003h1v1h-1zM1039 984h1v1h-1zM1039 965h1v1h-1zM1039 946h1v1h-1zM1039 928h1v1h-1zM1039 909h1v1h-1zM1039 890h1v1h-1zM1039 871h1v1h-1zM1039 852h1v1h-1zM1039 834h1v1h-1zM1039 815h1v1h-1zM1039 796h1v1h-1zM1039 777h1v1h-1zM1039 758h1v1h-1zM1039 740h1v1h-1zM1039 721h1v1h-1zM1039 702h1v1h-1zM1039 683h1v1h-1zM1039 665h1v1h-1zM1039 646h1v1h-1zM1039 627h1v1h-1zM1039 608h1v1h-1zM1039 589h1v1h-1zM1039 571h1v1h-1zM1039 552h1v1h-1zM1039 533h1v1h-1zM1039 514h1v1h-1zM1039 495h1v1h-1zM1039 477h1v1h-1zM1039 458h1v1h-1zM1039 439h1v1h-1zM1039 420h1v1h-1zM1039 402h1v1h-1zM1039 383h1v1h-1zM1039 364h1v1h-1zM1039 345h1v1h-1zM1039 326h1v1h-1zM1039 308h1v1h-1zM1039 289h1v1h-1zM1039 270h1v1h-1zM1039 251h1v1h-1zM1039 232h1v1h-1zM1039 214h1v1h-1zM1039 195h1v1h-1zM1039 176h1v1h-1zM1039 157h1v1h-1zM1039 139h1v1h-1zM1039 120h1v1h-1zM1058 1191h1v1h-1zM1058 1172h1v1h-1zM1058 1153h1v1h-1zM1058 1134h1v1h-1zM1058 1115h1v1h-1zM1058 1097h1v1h-1zM1058 1078h1v1h-1zM1058 1059h1v1h-1zM1058 1040h1v1h-1zM1058 1021h1v1h-1zM1058 1003h1v1h-1zM1058 984h1v1h-1zM1058 965h1v1h-1zM1058 946h1v1h-1zM1058 928h1v1h-1zM1058 909h1v1h-1zM1058 890h1v1h-1zM1058 871h1v1h-1zM1058 852h1v1h-1zM1058 834h1v1h-1zM1058 815h1v1h-1zM1058 796h1v1h-1zM1058 777h1v1h-1zM1058 758h1v1h-1zM1058 740h1v1h-1zM1058 721h1v1h-1zM1058 702h1v1h-1zM1058 683h1v1h-1zM1058 665h1v1h-1zM1058 646h1v1h-1zM1058 627h1v1h-1zM1058 608h1v1h-1zM1058 589h1v1h-1zM1058 571h1v1h-1zM1058 552h1v1h-1zM1058 533h1v1h-1zM1058 514h1v1h-1zM1058 495h1v1h-1zM1058 477h1v1h-1zM1058 458h1v1h-1zM1058 439h1v1h-1zM1058 420h1v1h-1zM1058 402h1v1h-1zM1058 383h1v1h-1zM1058 364h1v1h-1zM1058 345h1v1h-1zM1058 326h1v1h-1zM1058 308h1v1h-1zM1058 289h1v1h-1zM1058 270h1v1h-1zM1058 251h1v1h-1zM1058 232h1v1h-1zM1058 214h1v1h-1zM1058 195h1v1h-1zM1058 176h1v1h-1zM1058 157h1v1h-1zM1058 139h1v1h-1zM1058 120h1v1h-1zM1077 1191h1v1h-1zM1077 1172h1v1h-1zM1077 1153h1v1h-1zM1077 1134h1v1h-1zM1077 1115h1v1h-1zM1077 1097h1v1h-1zM1077 1078h1v1h-1zM1077 1059h1v1h-1zM1077 1040h1v1h-1zM1077 1021h1v1h-1zM1077 1003h1v1h-1zM1077 984h1v1h-1zM1077 965h1v1h-1zM1077 946h1v1h-1zM1077 928h1v1h-1zM1077 909h1v1h-1zM1077 890h1v1h-1zM1077 871h1v1h-1zM1077 852h1v1h-1zM1077 834h1v1h-1zM1077 815h1v1h-1zM1077 796h1v1h-1zM1077 777h1v1h-1zM1077 758h1v1h-1zM1077 740h1v1h-1zM1077 721h1v1h-1zM1077 702h1v1h-1zM1077 683h1v1h-1zM1077 665h1v1h-1zM1077 646h1v1h-1zM1077 627h1v1h-1zM1077 608h1v1h-1zM1077 589h1v1h-1zM1077 571h1v1h-1zM1077 552h1v1h-1zM1077 533h1v1h-1zM1077 514h1v1h-1zM1077 495h1v1h-1zM1077 477h1v1h-1zM1077 458h1v1h-1zM1077 439h1v1h-1zM1077 420h1v1h-1zM1077 402h1v1h-1zM1077 383h1v1h-1zM1077 364h1v1h-1zM1077 345h1v1h-1zM1077 326h1v1h-1zM1077 308h1v1h-1zM1077 289h1v1h-1zM1077 270h1v1h-1zM1077 251h1v1h-1zM1077 232h1v1h-1zM1077 214h1v1h-1zM1077 195h1v1h-1zM1077 176h1v1h-1zM1077 157h1v1h-1zM1077 139h1v1h-1zM1077 120h1v1h-1zM1095 1191h1v1h-1zM1095 1172h1v1h-1zM1095 1153h1v1h-1zM1095 1134h1v1h-1zM1095 1115h1v1h-1zM1095 1097h1v1h-1zM1095 1078h1v1h-1zM1095 1059h1v1h-1zM1095 1040h1v1h-1zM1095 1021h1v1h-1zM1095 1003h1v1h-1zM1095 984h1v1h-1zM1095 965h1v1h-1zM1095 946h1v1h-1zM1095 928h1v1h-1zM1095 909h1v1h-1zM1095 890h1v1h-1zM1095 871h1v1h-1zM1095 852h1v1h-1zM1095 834h1v1h-1zM1095 815h1v1h-1zM1095 796h1v1h-1zM1095 777h1v1h-1zM1095 758h1v1h-1zM1095 740h1v1h-1zM1095 721h1v1h-1zM1095 702h1v1h-1zM1095 683h1v1h-1zM1095 665h1v1h-1zM1095 646h1v1h-1zM1095 627h1v1h-1zM1095 608h1v1h-1zM1095 589h1v1h-1zM1095 571h1v1h-1zM1095 552h1v1h-1zM1095 533h1v1h-1zM1095 514h1v1h-1zM1095 495h1v1h-1zM1095 477h1v1h-1zM1095 458h1v1h-1zM1095 439h1v1h-1zM1095 420h1v1h-1zM1095 402h1v1h-1zM1095 383h1v1h-1zM1095 364h1v1h-1zM1095 345h1v1h-1zM1095 326h1v1h-1zM1095 308h1v1h-1zM1095 289h1v1h-1zM1095 270h1v1h-1zM1095 251h1v1h-1zM1095 232h1v1h-1zM1095 214h1v1h-1zM1095 195h1v1h-1zM1095 176h1v1h-1zM1095 157h1v1h-1zM1095 139h1v1h-1zM1095 120h1v1h-1zM1114 1191h1v1h-1zM1114 1172h1v1h-1zM1114 1153h1v1h-1zM1114 1134h1v1h-1zM1114 1115h1v1h-1zM1114 1097h1v1h-1zM1114 1078h1v1h-1zM1114 1059h1v1h-1zM1114 1040h1v1h-1zM1114 1021h1v1h-1zM1114 1003h1v1h-1zM1114 984h1v1h-1zM1114 965h1v1h-1zM1114 946h1v1h-1zM1114 928h1v1h-1zM1114 909h1v1h-1zM1114 890h1v1h-1zM1114 871h1v1h-1zM1114 852h1v1h-1zM1114 834h1v1h-1zM1114 815h1v1h-1zM1114 796h1v1h-1zM1114 777h1v1h-1zM1114 758h1v1h-1zM1114 740h1v1h-1zM1114 721h1v1h-1zM1114 702h1v1h-1zM1114 683h1v1h-1zM1114 665h1v1h-1zM1114 646h1v1h-1zM1114 627h1v1h-1zM1114 608h1v1h-1zM1114 589h1v1h-1zM1114 571h1v1h-1zM1114 552h1v1h-1zM1114 533h1v1h-1zM1114 514h1v1h-1zM1114 495h1v1h-1zM1114 477h1v1h-1zM1114 458h1v1h-1zM1114 439h1v1h-1zM1114 420h1v1h-1zM1114 402h1v1h-1zM1114 383h1v1h-1zM1114 364h1v1h-1zM1114 345h1v1h-1zM1114 326h1v1h-1zM1114 308h1v1h-1zM1114 289h1v1h-1zM1114 270h1v1h-1zM1114 251h1v1h-1zM1114 232h1v1h-1zM1114 214h1v1h-1zM1114 195h1v1h-1zM1114 176h1v1h-1zM1114 157h1v1h-1zM1114 139h1v1h-1zM1114 120h1v1h-1zM1133 1191h1v1h-1zM1133 1172h1v1h-1zM1133 1153h1v1h-1zM1133 1134h1v1h-1zM1133 1115h1v1h-1zM1133 1097h1v1h-1zM1133 1078h1v1h-1zM1133 1059h1v1h-1zM1133 1040h1v1h-1zM1133 1021h1v1h-1zM1133 1003h1v1h-1zM1133 984h1v1h-1zM1133 965h1v1h-1zM1133 946h1v1h-1zM1133 928h1v1h-1zM1133 909h1v1h-1zM1133 890h1v1h-1zM1133 871h1v1h-1zM1133 852h1v1h-1zM1133 834h1v1h-1zM1133 815h1v1h-1zM1133 796h1v1h-1zM1133 777h1v1h-1zM1133 758h1v1h-1zM1133 740h1v1h-1zM1133 721h1v1h-1zM1133 702h1v1h-1zM1133 683h1v1h-1zM1133 665h1v1h-1zM1133 646h1v1h-1zM1133 627h1v1h-1zM1133 608h1v1h-1zM1133 589h1v1h-1zM1133 571h1v1h-1zM1133 552h1v1h-1zM1133 533h1v1h-1zM1133 514h1v1h-1zM1133 495h1v1h-1zM1133 477h1v1h-1zM1133 458h1v1h-1zM1133 439h1v1h-1zM1133 420h1v1h-1zM1133 402h1v1h-1zM1133 383h1v1h-1zM1133 364h1v1h-1zM1133 345h1v1h-1zM1133 326h1v1h-1zM1133 308h1v1h-1zM1133 289h1v1h-1zM1133 270h1v1h-1zM1133 251h1v1h-1zM1133 232h1v1h-1zM1133 214h1v1h-1zM1133 195h1v1h-1zM1133 176h1v1h-1zM1133 157h1v1h-1zM1133 139h1v1h-1zM1133 120h1v1h-1zM1152 1191h1v1h-1zM1152 1172h1v1h-1zM1152 1153h1v1h-1zM1152 1134h1v1h-1zM1152 1115h1v1h-1zM1152 1097h1v1h-1zM1152 1078h1v1h-1zM1152 1059h1v1h-1zM1152 1040h1v1h-1zM1152 1021h1v1h-1zM1152 1003h1v1h-1zM1152 984h1v1h-1zM1152 965h1v1h-1zM1152 946h1v1h-1zM1152 928h1v1h-1zM1152 909h1v1h-1zM1152 890h1v1h-1zM1152 871h1v1h-1zM1152 852h1v1h-1zM1152 834h1v1h-1zM1152 815h1v1h-1zM1152 796h1v1h-1zM1152 777h1v1h-1zM1152 758h1v1h-1zM1152 740h1v1h-1zM1152 721h1v1h-1zM1152 702h1v1h-1zM1152 683h1v1h-1zM1152 665h1v1h-1zM1152 646h1v1h-1zM1152 627h1v1h-1zM1152 608h1v1h-1zM1152 589h1v1h-1zM1152 571h1v1h-1zM1152 552h1v1h-1zM1152 533h1v1h-1zM1152 514h1v1h-1zM1152 495h1v1h-1zM1152 477h1v1h-1zM1152 458h1v1h-1zM1152 439h1v1h-1zM1152 420h1v1h-1zM1152 402h1v1h-1zM1152 383h1v1h-1zM1152 364h1v1h-1zM1152 345h1v1h-1zM1152 326h1v1h-1zM1152 308h1v1h-1zM1152 289h1v1h-1zM1152 270h1v1h-1zM1152 251h1v1h-1zM1152 232h1v1h-1zM1152 214h1v1h-1zM1152 195h1v1h-1zM1152 176h1v1h-1zM1152 157h1v1h-1zM1152 139h1v1h-1zM1152 120h1v1h-1zM1171 1191h1v1h-1zM1171 1172h1v1h-1zM1171 1153h1v1h-1zM1171 1134h1v1h-1zM1171 1115h1v1h-1zM1171 1097h1v1h-1zM1171 1078h1v1h-1zM1171 1059h1v1h-1zM1171 1040h1v1h-1zM1171 1021h1v1h-1zM1171 1003h1v1h-1zM1171 984h1v1h-1zM1171 965h1v1h-1zM1171 946h1v1h-1zM1171 928h1v1h-1zM1171 909h1v1h-1zM1171 890h1v1h-1zM1171 871h1v1h-1zM1171 852h1v1h-1zM1171 834h1v1h-1zM1171 815h1v1h-1zM1171 796h1v1h-1zM1171 777h1v1h-1zM1171 758h1v1h-1zM1171 740h1v1h-1zM1171 721h1v1h-1zM1171 702h1v1h-1zM1171 683h1v1h-1zM1171 665h1v1h-1zM1171 646h1v1h-1zM1171 627h1v1h-1zM1171 608h1v1h-1zM1171 589h1v1h-1zM1171 571h1v1h-1zM1171 552h1v1h-1zM1171 533h1v1h-1zM1171 514h1v1h-1zM1171 495h1v1h-1zM1171 477h1v1h-1zM1171 458h1v1h-1zM1171 439h1v1h-1zM1171 420h1v1h-1zM1171 402h1v1h-1zM1171 383h1v1h-1zM1171 364h1v1h-1zM1171 345h1v1h-1zM1171 326h1v1h-1zM1171 308h1v1h-1zM1171 289h1v1h-1zM1171 270h1v1h-1zM1171 251h1v1h-1zM1171 232h1v1h-1zM1171 214h1v1h-1zM1171 195h1v1h-1zM1171 176h1v1h-1zM1171 157h1v1h-1zM1171 139h1v1h-1zM1171 120h1v1h-1zM1189 1191h1v1h-1zM1189 1172h1v1h-1zM1189 1153h1v1h-1zM1189 1134h1v1h-1zM1189 1115h1v1h-1zM1189 1097h1v1h-1zM1189 1078h1v1h-1zM1189 1059h1v1h-1zM1189 1040h1v1h-1zM1189 1021h1v1h-1zM1189 1003h1v1h-1zM1189 984h1v1h-1zM1189 965h1v1h-1zM1189 946h1v1h-1zM1189 928h1v1h-1zM1189 909h1v1h-1zM1189 890h1v1h-1zM1189 871h1v1h-1zM1189 852h1v1h-1zM1189 834h1v1h-1zM1189 815h1v1h-1zM1189 796h1v1h-1zM1189 777h1v1h-1zM1189 758h1v1h-1zM1189 740h1v1h-1zM1189 721h1v1h-1zM1189 702h1v1h-1zM1189 683h1v1h-1zM1189 665h1v1h-1zM1189 646h1v1h-1zM1189 627h1v1h-1zM1189 608h1v1h-1zM1189 589h1v1h-1zM1189 571h1v1h-1zM1189 552h1v1h-1zM1189 533h1v1h-1zM1189 514h1v1h-1zM1189 495h1v1h-1zM1189 477h1v1h-1zM1189 458h1v1h-1zM1189 439h1v1h-1zM1189 420h1v1h-1zM1189 402h1v1h-1zM1189 383h1v1h-1zM1189 364h1v1h-1zM1189 345h1v1h-1zM1189 326h1v1h-1zM1189 308h1v1h-1zM1189 289h1v1h-1zM1189 270h1v1h-1zM1189 251h1v1h-1zM1189 232h1v1h-1zM1189 214h1v1h-1zM1189 195h1v1h-1zM1189 176h1v1h-1zM1189 157h1v1h-1zM1189 139h1v1h-1zM1189 120h1v1h-1zM1208 1191h1v1h-1zM1208 1172h1v1h-1zM1208 1153h1v1h-1zM1208 1134h1v1h-1zM1208 1115h1v1h-1zM1208 1097h1v1h-1zM1208 1078h1v1h-1zM1208 1059h1v1h-1zM1208 1040h1v1h-1zM1208 1021h1v1h-1zM1208 1003h1v1h-1zM1208 984h1v1h-1zM1208 965h1v1h-1zM1208 946h1v1h-1zM1208 928h1v1h-1zM1208 909h1v1h-1zM1208 890h1v1h-1zM1208 871h1v1h-1zM1208 852h1v1h-1zM1208 834h1v1h-1zM1208 815h1v1h-1zM1208 796h1v1h-1zM1208 777h1v1h-1zM1208 758h1v1h-1zM1208 740h1v1h-1zM1208 721h1v1h-1zM1208 702h1v1h-1zM1208 683h1v1h-1zM1208 665h1v1h-1zM1208 646h1v1h-1zM1208 627h1v1h-1zM1208 608h1v1h-1zM1208 589h1v1h-1zM1208 571h1v1h-1zM1208 552h1v1h-1zM1208 533h1v1h-1zM1208 514h1v1h-1zM1208 495h1v1h-1zM1208 477h1v1h-1zM1208 458h1v1h-1zM1208 439h1v1h-1zM1208 420h1v1h-1zM1208 402h1v1h-1zM1208 383h1v1h-1zM1208 364h1v1h-1zM1208 345h1v1h-1zM1208 326h1v1h-1zM1208 308h1v1h-1zM1208 289h1v1h-1zM1208 270h1v1h-1zM1208 251h1v1h-1zM1208 232h1v1h-1zM1208 214h1v1h-1zM1208 195h1v1h-1zM1208 176h1v1h-1zM1208 157h1v1h-1zM1208 139h1v1h-1zM1208 120h1v1h-1zM1227 1191h1v1h-1zM1227 1172h1v1h-1zM1227 1153h1v1h-1zM1227 1134h1v1h-1zM1227 1115h1v1h-1zM1227 1097h1v1h-1zM1227 1078h1v1h-1zM1227 1059h1v1h-1zM1227 1040h1v1h-1zM1227 1021h1v1h-1zM1227 1003h1v1h-1zM1227 984h1v1h-1zM1227 965h1v1h-1zM1227 946h1v1h-1zM1227 928h1v1h-1zM1227 909h1v1h-1zM1227 890h1v1h-1zM1227 871h1v1h-1zM1227 852h1v1h-1zM1227 834h1v1h-1zM1227 815h1v1h-1zM1227 796h1v1h-1zM1227 777h1v1h-1zM1227 758h1v1h-1zM1227 740h1v1h-1zM1227 721h1v1h-1zM1227 702h1v1h-1zM1227 683h1v1h-1zM1227 665h1v1h-1zM1227 646h1v1h-1zM1227 627h1v1h-1zM1227 608h1v1h-1zM1227 589h1v1h-1zM1227 571h1v1h-1zM1227 552h1v1h-1zM1227 533h1v1h-1zM1227 514h1v1h-1zM1227 495h1v1h-1zM1227 477h1v1h-1zM1227 458h1v1h-1zM1227 439h1v1h-1zM1227 420h1v1h-1zM1227 402h1v1h-1zM1227 383h1v1h-1zM1227 364h1v1h-1zM1227 345h1v1h-1zM1227 326h1v1h-1zM1227 308h1v1h-1zM1227 289h1v1h-1zM1227 270h1v1h-1zM1227 251h1v1h-1zM1227 232h1v1h-1zM1227 214h1v1h-1zM1227 195h1v1h-1zM1227 176h1v1h-1zM1227 157h1v1h-1zM1227 139h1v1h-1zM1227 120h1v1h-1zM1246 1191h1v1h-1zM1246 1172h1v1h-1zM1246 1153h1v1h-1zM1246 1134h1v1h-1zM1246 1115h1v1h-1zM1246 1097h1v1h-1zM1246 1078h1v1h-1zM1246 1059h1v1h-1zM1246 1040h1v1h-1zM1246 1021h1v1h-1zM1246 1003h1v1h-1zM1246 984h1v1h-1zM1246 965h1v1h-1zM1246 946h1v1h-1zM1246 928h1v1h-1zM1246 909h1v1h-1zM1246 890h1v1h-1zM1246 871h1v1h-1zM1246 852h1v1h-1zM1246 834h1v1h-1zM1246 815h1v1h-1zM1246 796h1v1h-1zM1246 777h1v1h-1zM1246 758h1v1h-1zM1246 740h1v1h-1zM1246 721h1v1h-1zM1246 702h1v1h-1zM1246 683h1v1h-1zM1246 665h1v1h-1zM1246 646h1v1h-1zM1246 627h1v1h-1zM1246 608h1v1h-1zM1246 589h1v1h-1zM1246 571h1v1h-1zM1246 552h1v1h-1zM1246 533h1v1h-1zM1246 514h1v1h-1zM1246 495h1v1h-1zM1246 477h1v1h-1zM1246 458h1v1h-1zM1246 439h1v1h-1zM1246 420h1v1h-1zM1246 402h1v1h-1zM1246 383h1v1h-1zM1246 364h1v1h-1zM1246 345h1v1h-1zM1246 326h1v1h-1zM1246 308h1v1h-1zM1246 289h1v1h-1zM1246 270h1v1h-1zM1246 251h1v1h-1zM1246 232h1v1h-1zM1246 214h1v1h-1zM1246 195h1v1h-1zM1246 176h1v1h-1zM1246 157h1v1h-1zM1246 139h1v1h-1zM1246 120h1v1h-1zM1264 1191h1v1h-1zM1264 1172h1v1h-1zM1264 1153h1v1h-1zM1264 1134h1v1h-1zM1264 1115h1v1h-1zM1264 1097h1v1h-1zM1264 1078h1v1h-1zM1264 1059h1v1h-1zM1264 1040h1v1h-1zM1264 1021h1v1h-1zM1264 1003h1v1h-1zM1264 984h1v1h-1zM1264 965h1v1h-1zM1264 946h1v1h-1zM1264 928h1v1h-1zM1264 909h1v1h-1zM1264 890h1v1h-1zM1264 871h1v1h-1zM1264 852h1v1h-1zM1264 834h1v1h-1zM1264 815h1v1h-1zM1264 796h1v1h-1zM1264 777h1v1h-1zM1264 758h1v1h-1zM1264 740h1v1h-1zM1264 721h1v1h-1zM1264 702h1v1h-1zM1264 683h1v1h-1zM1264 665h1v1h-1zM1264 646h1v1h-1zM1264 627h1v1h-1zM1264 608h1v1h-1zM1264 589h1v1h-1zM1264 571h1v1h-1zM1264 552h1v1h-1zM1264 533h1v1h-1zM1264 514h1v1h-1zM1264 495h1v1h-1zM1264 477h1v1h-1zM1264 458h1v1h-1zM1264 439h1v1h-1zM1264 420h1v1h-1zM1264 402h1v1h-1zM1264 383h1v1h-1zM1264 364h1v1h-1zM1264 345h1v1h-1zM1264 326h1v1h-1zM1264 308h1v1h-1zM1264 289h1v1h-1zM1264 270h1v1h-1zM1264 251h1v1h-1zM1264 232h1v1h-1zM1264 214h1v1h-1zM1264 195h1v1h-1zM1264 176h1v1h-1zM1264 157h1v1h-1zM1264 139h1v1h-1zM1264 120h1v1h-1zM1283 1191h1v1h-1zM1283 1172h1v1h-1zM1283 1153h1v1h-1zM1283 1134h1v1h-1zM1283 1115h1v1h-1zM1283 1097h1v1h-1zM1283 1078h1v1h-1zM1283 1059h1v1h-1zM1283 1040h1v1h-1zM1283 1021h1v1h-1zM1283 1003h1v1h-1zM1283 984h1v1h-1zM1283 965h1v1h-1zM1283 946h1v1h-1zM1283 928h1v1h-1zM1283 909h1v1h-1zM1283 890h1v1h-1zM1283 871h1v1h-1zM1283 852h1v1h-1zM1283 834h1v1h-1zM1283 815h1v1h-1zM1283 796h1v1h-1zM1283 777h1v1h-1zM1283 758h1v1h-1zM1283 740h1v1h-1zM1283 721h1v1h-1zM1283 702h1v1h-1zM1283 683h1v1h-1zM1283 665h1v1h-1zM1283 646h1v1h-1zM1283 627h1v1h-1zM1283 608h1v1h-1zM1283 589h1v1h-1zM1283 571h1v1h-1zM1283 552h1v1h-1zM1283 533h1v1h-1zM1283 514h1v1h-1zM1283 495h1v1h-1zM1283 477h1v1h-1zM1283 458h1v1h-1zM1283 439h1v1h-1zM1283 420h1v1h-1zM1283 402h1v1h-1zM1283 383h1v1h-1zM1283 364h1v1h-1zM1283 345h1v1h-1zM1283 326h1v1h-1zM1283 308h1v1h-1zM1283 289h1v1h-1zM1283 270h1v1h-1zM1283 251h1v1h-1zM1283 232h1v1h-1zM1283 214h1v1h-1zM1283 195h1v1h-1zM1283 176h1v1h-1zM1283 157h1v1h-1zM1283 139h1v1h-1zM1283 120h1v1h-1zM1302 1191h1v1h-1zM1302 1172h1v1h-1zM1302 1153h1v1h-1zM1302 1134h1v1h-1zM1302 1115h1v1h-1zM1302 1097h1v1h-1zM1302 1078h1v1h-1zM1302 1059h1v1h-1zM1302 1040h1v1h-1zM1302 1021h1v1h-1zM1302 1003h1v1h-1zM1302 984h1v1h-1zM1302 965h1v1h-1zM1302 946h1v1h-1zM1302 928h1v1h-1zM1302 909h1v1h-1zM1302 890h1v1h-1zM1302 871h1v1h-1zM1302 852h1v1h-1zM1302 834h1v1h-1zM1302 815h1v1h-1zM1302 796h1v1h-1zM1302 777h1v1h-1zM1302 758h1v1h-1zM1302 740h1v1h-1zM1302 721h1v1h-1zM1302 702h1v1h-1zM1302 683h1v1h-1zM1302 665h1v1h-1zM1302 646h1v1h-1zM1302 627h1v1h-1zM1302 608h1v1h-1zM1302 589h1v1h-1zM1302 571h1v1h-1zM1302 552h1v1h-1zM1302 533h1v1h-1zM1302 514h1v1h-1zM1302 495h1v1h-1zM1302 477h1v1h-1zM1302 458h1v1h-1zM1302 439h1v1h-1zM1302 420h1v1h-1zM1302 402h1v1h-1zM1302 383h1v1h-1zM1302 364h1v1h-1zM1302 345h1v1h-1zM1302 326h1v1h-1zM1302 308h1v1h-1zM1302 289h1v1h-1zM1302 270h1v1h-1zM1302 251h1v1h-1zM1302 232h1v1h-1zM1302 214h1v1h-1zM1302 195h1v1h-1zM1302 176h1v1h-1zM1302 157h1v1h-1zM1302 139h1v1h-1zM1302 120h1v1h-1zM1321 1191h1v1h-1zM1321 1172h1v1h-1zM1321 1153h1v1h-1zM1321 1134h1v1h-1zM1321 1115h1v1h-1zM1321 1097h1v1h-1zM1321 1078h1v1h-1zM1321 1059h1v1h-1zM1321 1040h1v1h-1zM1321 1021h1v1h-1zM1321 1003h1v1h-1zM1321 984h1v1h-1zM1321 965h1v1h-1zM1321 946h1v1h-1zM1321 928h1v1h-1zM1321 909h1v1h-1zM1321 890h1v1h-1zM1321 871h1v1h-1zM1321 852h1v1h-1zM1321 834h1v1h-1zM1321 815h1v1h-1zM1321 796h1v1h-1zM1321 777h1v1h-1zM1321 758h1v1h-1zM1321 740h1v1h-1zM1321 721h1v1h-1zM1321 702h1v1h-1zM1321 683h1v1h-1zM1321 665h1v1h-1zM1321 646h1v1h-1zM1321 627h1v1h-1zM1321 608h1v1h-1zM1321 589h1v1h-1zM1321 571h1v1h-1zM1321 552h1v1h-1zM1321 533h1v1h-1zM1321 514h1v1h-1zM1321 495h1v1h-1zM1321 477h1v1h-1zM1321 458h1v1h-1zM1321 439h1v1h-1zM1321 420h1v1h-1zM1321 402h1v1h-1zM1321 383h1v1h-1zM1321 364h1v1h-1zM1321 345h1v1h-1zM1321 326h1v1h-1zM1321 308h1v1h-1zM1321 289h1v1h-1zM1321 270h1v1h-1zM1321 251h1v1h-1zM1321 232h1v1h-1zM1321 214h1v1h-1zM1321 195h1v1h-1zM1321 176h1v1h-1zM1321 157h1v1h-1zM1321 139h1v1h-1zM1321 120h1v1h-1zM1340 1191h1v1h-1zM1340 1172h1v1h-1zM1340 1153h1v1h-1zM1340 1134h1v1h-1zM1340 1115h1v1h-1zM1340 1097h1v1h-1zM1340 1078h1v1h-1zM1340 1059h1v1h-1zM1340 1040h1v1h-1zM1340 1021h1v1h-1zM1340 1003h1v1h-1zM1340 984h1v1h-1zM1340 965h1v1h-1zM1340 946h1v1h-1zM1340 928h1v1h-1zM1340 909h1v1h-1zM1340 890h1v1h-1zM1340 871h1v1h-1zM1340 852h1v1h-1zM1340 834h1v1h-1zM1340 815h1v1h-1zM1340 796h1v1h-1zM1340 777h1v1h-1zM1340 758h1v1h-1zM1340 740h1v1h-1zM1340 721h1v1h-1zM1340 702h1v1h-1zM1340 683h1v1h-1zM1340 665h1v1h-1zM1340 646h1v1h-1zM1340 627h1v1h-1zM1340 608h1v1h-1zM1340 589h1v1h-1zM1340 571h1v1h-1zM1340 552h1v1h-1zM1340 533h1v1h-1zM1340 514h1v1h-1zM1340 495h1v1h-1zM1340 477h1v1h-1zM1340 458h1v1h-1zM1340 439h1v1h-1zM1340 420h1v1h-1zM1340 402h1v1h-1zM1340 383h1v1h-1zM1340 364h1v1h-1zM1340 345h1v1h-1zM1340 326h1v1h-1zM1340 308h1v1h-1zM1340 289h1v1h-1zM1340 270h1v1h-1zM1340 251h1v1h-1zM1340 232h1v1h-1zM1340 214h1v1h-1zM1340 195h1v1h-1zM1340 176h1v1h-1zM1340 157h1v1h-1zM1340 139h1v1h-1zM1340 120h1v1h-1zM1358 1191h1v1h-1zM1358 1172h1v1h-1zM1358 1153h1v1h-1zM1358 1134h1v1h-1zM1358 1115h1v1h-1zM1358 1097h1v1h-1zM1358 1078h1v1h-1zM1358 1059h1v1h-1zM1358 1040h1v1h-1zM1358 1021h1v1h-1zM1358 1003h1v1h-1zM1358 984h1v1h-1zM1358 965h1v1h-1zM1358 946h1v1h-1zM1358 928h1v1h-1zM1358 909h1v1h-1zM1358 890h1v1h-1zM1358 871h1v1h-1zM1358 852h1v1h-1zM1358 834h1v1h-1zM1358 815h1v1h-1zM1358 796h1v1h-1zM1358 777h1v1h-1zM1358 758h1v1h-1zM1358 740h1v1h-1zM1358 721h1v1h-1zM1358 702h1v1h-1zM1358 683h1v1h-1zM1358 665h1v1h-1zM1358 646h1v1h-1zM1358 627h1v1h-1zM1358 608h1v1h-1zM1358 589h1v1h-1zM1358 571h1v1h-1zM1358 552h1v1h-1zM1358 533h1v1h-1zM1358 514h1v1h-1zM1358 495h1v1h-1zM1358 477h1v1h-1zM1358 458h1v1h-1zM1358 439h1v1h-1zM1358 420h1v1h-1zM1358 402h1v1h-1zM1358 383h1v1h-1zM1358 364h1v1h-1zM1358 345h1v1h-1zM1358 326h1v1h-1zM1358 308h1v1h-1zM1358 289h1v1h-1zM1358 270h1v1h-1zM1358 251h1v1h-1zM1358 232h1v1h-1zM1358 214h1v1h-1zM1358 195h1v1h-1zM1358 176h1v1h-1zM1358 157h1v1h-1zM1358 139h1v1h-1zM1358 120h1v1h-1z" fill="#c4c4c4"/><g fill="none" stroke="#000" stroke-width="1" shape-rendering="crispEdges">
<path d="M349.5 551.5L1183.5 551.5A6 6 0 0 1 1189.5 557.5L1189.5 590.5A21 18 0 0 1 1168.5 608.5L364.5 608.5A20 18 0 0 1 344.5 590.5L344.5 557.5A5 6 0 0 1 349.5 551.5Z"/>
<path d="M349.5 626.5L1183.5 626.5A6 6 0 0 1 1189.5 632.5L1189.5 665.5A18 18 0 0 1 1171.5 683.5L1150.5 683.5A17 22 0 0 1 1133.5 661.5L1133.5 645.5L1035.5 645.5L1035.5 661.5A18 22 0 0 1 1017.5 683.5L515.5 683.5A17 22 0 0 1 498.5 661.5L498.5 645.5L400.5 645.5L400.5 661.5A18 22 0 0 1 382.5 683.5L361.5 683.5A17 18 0 0 1 344.5 665.5L344.5 632.5A5 6 0 0 1 349.5 626.5Z"/>
<path d="M349.5 683.5L1183.5 683.5A6 5 0 0 1 1189.5 688.5L1189.5 721.5A18 18 0 0 1 1171.5 739.5L1150.5 739.5A17 21 0 0 1 1133.5 718.5L1133.5 702.5L1035.5 702.5L1035.5 718.5A18 21 0 0 1 1017.5 739.5L515.5 739.5A17 21 0 0 1 498.5 718.5L498.5 702.5L400.5 702.5L400.5 718.5A18 21 0 0 1 382.5 739.5L361.5 739.5A17 18 0 0 1 344.5 721.5L344.5 688.5A5 5 0 0 1 349.5 683.5Z"/>
<path d="M537.5 889.5L1371.5 889.5A6 6 0 0 1 1377.5 895.5L1377.5 928.5A18 18 0 0 1 1359.5 946.5L1338.5 946.5A18 22 0 0 1 1320.5 924.5L1320.5 908.5L1223.5 908.5L1223.5 924.5A18 22 0 0 1 1205.5 946.5L703.5 946.5A18 22 0 0 1 685.5 924.5L685.5 908.5L588.5 908.5L588.5 924.5A18 22 0 0 1 570.5 946.5L549.5 946.5A18 18 0 0 1 531.5 928.5L531.5 895.5A6 6 0 0 1 537.5 889.5Z"/>
</g><g fill="none" stroke="#000" stroke-width="1" shape-rendering="crispEdges">
<path d="M379.42 581.08L378.7 583.31L377.31 585.21L375.41 586.6L373.18 587.32L370.82 587.32L368.59 586.6L366.69 585.21L365.3 583.31L364.58 581.08L364.58 578.72L365.3 576.49L366.69 574.59L368.59 573.2L370.82 572.48L373.18 572.48L375.41 573.2L377.31 574.59L378.7 576.49L379.42 578.72Z"/><path d="M773.42 581.08L772.7 583.31L771.31 585.21L769.41 586.6L767.18 587.32L764.82 587.32L762.59 586.6L760.69 585.21L759.3 583.31L758.58 581.08L758.58 578.72L759.3 576.49L760.69 574.59L762.59 573.2L764.82 572.48L767.18 572.48L769.41 573.2L771.31 574.59L772.7 576.49L773.42 578.72Z"/><path d="M1168.42 581.08L1167.7 583.31L1166.31 585.21L1164.41 586.6L1162.18 587.32L1159.82 587.32L1157.59 586.6L1155.69 585.21L1154.3 583.31L1153.58 581.08L1153.58 578.72L1154.3 576.49L1155.69 574.59L1157.59 573.2L1159.82 572.48L1162.18 572.48L1164.41 573.2L1166.31 574.59L1167.7 576.49L1168.42 578.72Z"/>
<path d="M381.28 656.37L380.37 659.16L378.64 661.54L376.26 663.27L373.47 664.18L370.53 664.18L367.74 663.27L365.36 661.54L363.63 659.16L362.72 656.37L362.72 653.43L363.63 650.64L365.36 648.26L367.74 646.53L370.53 645.62L373.47 645.62L376.26 646.53L378.64 648.26L380.37 650.64L381.28 653.43Z"/><path d="M775.28 656.37L774.37 659.16L772.64 661.54L770.26 663.27L767.47 664.18L764.53 664.18L761.74 663.27L759.36 661.54L757.63 659.16L756.72 656.37L756.72 653.43L757.63 650.64L759.36 648.26L761.74 646.53L764.53 645.62L767.47 645.62L770.26 646.53L772.64 648.26L774.37 650.64L775.28 653.43Z"/><path d="M1170.28 656.37L1169.37 659.16L1167.64 661.54L1165.26 663.27L1162.47 664.18L1159.53 664.18L1156.74 663.27L1154.36 661.54L1152.63 659.16L1151.72 656.37L1151.72 653.43L1152.63 650.64L1154.36 648.26L1156.74 646.53L1159.53 645.62L1162.47 645.62L1165.26 646.53L1167.64 648.26L1169.37 650.64L1170.28 653.43Z"/>
<path d="M381.28 712.37L380.37 715.16L378.64 717.54L376.26 719.27L373.47 720.18L370.53 720.18L367.74 719.27L365.36 717.54L363.63 715.16L362.72 712.37L362.72 709.43L363.63 706.64L365.36 704.26L367.74 702.53L370.53 701.62L373.47 701.62L376.26 702.53L378.64 704.26L380.37 706.64L381.28 709.43Z"/><path d="M775.28 712.37L774.37 715.16L772.64 717.54L770.26 719.27L767.47 720.18L764.53 720.18L761.74 719.27L759.36 717.54L757.63 715.16L756.72 712.37L756.72 709.43L757.63 706.64L759.36 704.26L761.74 702.53L764.53 701.62L767.47 701.62L770.26 702.53L772.64 704.26L774.37 706.64L775.28 709.43Z"/><path d="M1170.28 712.37L1169.37 715.16L1167.64 717.54L1165.26 719.27L1162.47 720.18L1159.53 720.18L1156.74 719.27L1154.36 717.54L1152.63 715.16L1151.72 712.37L1151.72 709.43L1152.63 706.64L1154.36 704.26L1156.74 702.53L1159.53 701.62L1162.47 701.62L1165.26 702.53L1167.64 704.26L1169.37 706.64L1170.28 709.43Z"/>
<path d="M567.42 919.08L566.7 921.31L565.31 923.21L563.41 924.6L561.18 925.32L558.82 925.32L556.59 924.6L554.69 923.21L553.3 921.31L552.58 919.08L552.58 916.72L553.3 914.49L554.69 912.59L556.59 911.2L558.82 910.48L561.18 910.48L563.41 911.2L565.31 912.59L566.7 914.49L567.42 916.72Z"/><path d="M961.42 919.08L960.7 921.31L959.31 923.21L957.41 924.6L955.18 925.32L952.82 925.32L950.59 924.6L948.69 923.21L947.3 921.31L946.58 919.08L946.58 916.72L947.3 914.49L948.69 912.59L950.59 911.2L952.82 910.48L955.18 910.48L957.41 911.2L959.31 912.59L960.7 914.49L961.42 916.72Z"/><path d="M1356.42 919.08L1355.7 921.31L1354.31 923.21L1352.41 924.6L1350.18 925.32L1347.82 925.32L1345.59 924.6L1343.69 923.21L1342.3 921.31L1341.58 919.08L1341.58 916.72L1342.3 914.49L1343.69 912.59L1345.59 911.2L1347.82 910.48L1350.18 910.48L1352.41 911.2L1354.31 912.59L1355.7 914.49L1356.42 916.72Z"/>
</g>
<path d="M324 382.5H365M344.5 362V403" stroke="#ff2020" stroke-width="1.3"/>
<g stroke="#c03030" stroke-width="1.1" fill="none"><circle cx="766.8" cy="683.8" r="4.6"/><path d="M761.8 683.8h10M766.8 678.8v10"/></g></g><path d="M118.5 113V120M137.5 117V120M156.5 113V120M174.5 117V120M193.5 113V120M212.5 117V120M231.5 113V120M250.5 117V120M268.5 113V120M287.5 117V120M306.5 113V120M325.5 117V120M344.5 113V120M362.5 117V120M381.5 113V120M400.5 117V120M419.5 113V120M437.5 117V120M456.5 113V120M475.5 117V120M494.5 113V120M513.5 117V120M531.5 113V120M550.5 117V120M569.5 113V120M588.5 117V120M607.5 113V120M625.5 117V120M644.5 113V120M663.5 117V120M682.5 113V120M700.5 117V120M719.5 113V120M738.5 117V120M757.5 113V120M776.5 117V120M794.5 113V120M813.5 117V120M832.5 113V120M851.5 117V120M870.5 113V120M888.5 117V120M907.5 113V120M926.5 117V120M945.5 113V120M963.5 117V120M982.5 113V120M1001.5 117V120M1020.5 113V120M1039.5 117V120M1057.5 113V120M1076.5 117V120M1095.5 113V120M1114.5 117V120M1133.5 113V120M1151.5 117V120M1170.5 113V120M1189.5 117V120M1208.5 113V120M1226.5 117V120M1245.5 113V120M1264.5 117V120M1283.5 113V120M1302.5 117V120M1320.5 113V120M1339.5 117V120M1358.5 113V120" stroke="#000" stroke-width="1.4"/>
<g clip-path="url(#rt)" font-family="Liberation Sans, sans-serif" font-size="11.3" text-anchor="middle" fill="#000">
<text x="118.5" y="108">-120</text>
<text x="156.5" y="108">-100</text>
<text x="193.5" y="108">-80</text>
<text x="231.5" y="108">-60</text>
<text x="268.5" y="108">-40</text>
<text x="306.5" y="108">-20</text>
<text x="344.5" y="108">0</text>
<text x="381.5" y="108">20</text>
<text x="419.5" y="108">40</text>
<text x="456.5" y="108">60</text>
<text x="494.5" y="108">80</text>
<text x="531.5" y="108">100</text>
<text x="569.5" y="108">120</text>
<text x="607.5" y="108">140</text>
<text x="644.5" y="108">160</text>
<text x="682.5" y="108">180</text>
<text x="719.5" y="108">200</text>
<text x="757.5" y="108">220</text>
<text x="794.5" y="108">240</text>
<text x="832.5" y="108">260</text>
<text x="870.5" y="108">280</text>
<text x="907.5" y="108">300</text>
<text x="945.5" y="108">320</text>
<text x="982.5" y="108">340</text>
<text x="1020.5" y="108">360</text>
<text x="1057.5" y="108">380</text>
<text x="1095.5" y="108">400</text>
<text x="1133.5" y="108">420</text>
<text x="1170.5" y="108">440</text>
<text x="1208.5" y="108">460</text>
<text x="1245.5" y="108">480</text>
<text x="1283.5" y="108">500</text>
<text x="1320.5" y="108">520</text>
<text x="1358.5" y="108">540</text>
</g>
<path d="M114 1190.5H117M110 1171.5H117M114 1152.5H117M110 1134.5H117M114 1115.5H117M110 1096.5H117M114 1077.5H117M110 1059.5H117M114 1040.5H117M110 1021.5H117M114 1002.5H117M110 983.5H117M114 965.5H117M110 946.5H117M114 927.5H117M110 908.5H117M114 889.5H117M110 871.5H117M114 852.5H117M110 833.5H117M114 814.5H117M110 796.5H117M114 777.5H117M110 758.5H117M114 739.5H117M110 720.5H117M114 702.5H117M110 683.5H117M114 664.5H117M110 645.5H117M114 626.5H117M110 608.5H117M114 589.5H117M110 570.5H117M114 551.5H117M110 533.5H117M114 514.5H117M110 495.5H117M114 476.5H117M110 457.5H117M114 439.5H117M110 420.5H117M114 401.5H117M110 382.5H117M114 363.5H117M110 345.5H117M114 326.5H117M110 307.5H117M114 288.5H117M110 270.5H117M114 251.5H117M110 232.5H117M114 213.5H117M110 194.5H117M114 176.5H117M110 157.5H117M114 138.5H117M110 119.5H117" stroke="#000" stroke-width="1.4"/>
<g clip-path="url(#rl)" font-family="Liberation Sans, sans-serif" font-size="11.3" text-anchor="middle" fill="#000">
<text transform="translate(105 1209.5) rotate(-90)">-440</text>
<text transform="translate(105 1171.5) rotate(-90)">-420</text>
<text transform="translate(105 1134.5) rotate(-90)">-400</text>
<text transform="translate(105 1096.5) rotate(-90)">-380</text>
<text transform="translate(105 1059.5) rotate(-90)">-360</text>
<text transform="translate(105 1021.5) rotate(-90)">-340</text>
<text transform="translate(105 983.5) rotate(-90)">-320</text>
<text transform="translate(105 946.5) rotate(-90)">-300</text>
<text transform="translate(105 908.5) rotate(-90)">-280</text>
<text transform="translate(105 871.5) rotate(-90)">-260</text>
<text transform="translate(105 833.5) rotate(-90)">-240</text>
<text transform="translate(105 796.5) rotate(-90)">-220</text>
<text transform="translate(105 758.5) rotate(-90)">-200</text>
<text transform="translate(105 720.5) rotate(-90)">-180</text>
<text transform="translate(105 683.5) rotate(-90)">-160</text>
<text transform="translate(105 645.5) rotate(-90)">-140</text>
<text transform="translate(105 608.5) rotate(-90)">-120</text>
<text transform="translate(105 570.5) rotate(-90)">-100</text>
<text transform="translate(105 533.5) rotate(-90)">-80</text>
<text transform="translate(105 495.5) rotate(-90)">-60</text>
<text transform="translate(105 457.5) rotate(-90)">-40</text>
<text transform="translate(105 420.5) rotate(-90)">-20</text>
<text transform="translate(105 382.5) rotate(-90)">0</text>
<text transform="translate(105 345.5) rotate(-90)">20</text>
<text transform="translate(105 307.5) rotate(-90)">40</text>
<text transform="translate(105 270.5) rotate(-90)">60</text>
<text transform="translate(105 232.5) rotate(-90)">80</text>
<text transform="translate(105 194.5) rotate(-90)">100</text>
<text transform="translate(105 157.5) rotate(-90)">120</text>
<text transform="translate(105 119.5) rotate(-90)">140</text>
</g></svg>
<svg style="position:absolute;left:1020px;top:110px;" width="14" height="8" viewBox="0 0 14 8"><path d="M5 3H10.2L7.6 6.2Z" fill="#000"/></svg>
<svg style="position:absolute;left:106px;top:748px;" width="10" height="12" viewBox="0 0 10 12"><path d="M4 3V9.2L7.2 6.1Z" fill="#000"/></svg>
<div style="left:1374px;top:120px;width:14px;height:1084px;background:linear-gradient(90deg,#fdfdfd,#ececec);border-left:1px solid #bdbdbd"></div>
<div style="left:1374px;top:133px;width:14px;height:196px;background:#e4e4e4;border-left:1px solid #b8b8b8;border-bottom:1px solid #bcbcbc"></div>
<div style="left:1374px;top:902px;width:14px;height:288px;background:#e4e4e4;border-left:1px solid #b8b8b8;border-top:1px solid #bcbcbc;border-bottom:1px solid #bcbcbc"></div>
<svg style="position:absolute;left:1374px;top:120px;" width="14" height="13" viewBox="0 0 14 13"><path d="M3.5 8.5L7 4.5L10.5 8.5Z" fill="#555"/></svg>
<svg style="position:absolute;left:1374px;top:1190px;" width="14" height="14" viewBox="0 0 14 14"><path d="M3.5 5L7 9L10.5 5Z" fill="#555"/></svg>
<div style="left:117px;top:1204px;width:1206px;height:14px;background:linear-gradient(#fdfdfd,#efefef);border-top:1px solid #bdbdbd"></div>
<div style="left:131px;top:1204px;width:820px;height:14px;background:#e3e3e3;border-top:1px solid #b8b8b8;border-right:1px solid #a8a8a8;border-left:1px solid #c8c8c8"></div>
<svg style="position:absolute;left:117px;top:1204px;" width="14" height="14" viewBox="0 0 14 14"><path d="M8.5 3.5L4.5 7L8.5 10.5Z" fill="#555"/></svg>
<svg style="position:absolute;left:1309px;top:1204px;" width="14" height="14" viewBox="0 0 14 14"><path d="M5.5 3.5L9.5 7L5.5 10.5Z" fill="#555"/></svg>
<div class="t" style="right:327px;top:1204.8px;font-size:12px;transform:scaleX(0.92);transform-origin:100% 0">10 &lt; 100</div>
<div style="left:92px;top:1226px;width:1296px;height:98px;background:#fff;border-top:1px solid #b4b4b4;border-bottom:1px solid #b4b4b4"></div>
<div style="left:93px;top:1227px;width:1280px;height:96px;overflow:hidden">
<div class="t" style="left:4px;top:-8px">[17:56:21] Autosaving to: /home/nailxx/Dropbox/Figuro/texts/qcad-editing-basics/~Дно_10мм.dxf...</div>
<div class="t" style="left:4px;top:9px">[17:56:22] Autosave complete.</div>
<div class="t" style="left:4px;top:26px">[18:01:21] Autosaving to: /home/nailxx/Dropbox/Figuro/texts/qcad-editing-basics/~Дно_10мм.dxf...</div>
<div class="t" style="left:4px;top:43px">[18:01:21] Autosave complete.</div>
<div class="t" style="left:4px;top:60px">[18:06:21] Autosaving to: /home/nailxx/Dropbox/Figuro/texts/qcad-editing-basics/~Дно_10мм.dxf...</div>
<div class="t" style="left:4px;top:77px">[18:06:22] Autosave complete.</div>
</div>
<div style="left:1373px;top:1227px;width:15px;height:96px;background:linear-gradient(90deg,#fcfcfc,#eeeeee);border-left:1px solid #c4c4c4"></div>
<div style="left:1373px;top:1240px;width:15px;height:42px;background:#e3e3e3;border-left:1px solid #b8b8b8;border-top:1px solid #c0c0c0;border-bottom:1px solid #b8b8b8"></div>
<svg style="position:absolute;left:1373px;top:1227px;" width="15" height="13" viewBox="0 0 15 13"><path d="M4 8.5L7.5 4.5L11 8.5Z" fill="#555"/></svg>
<svg style="position:absolute;left:1373px;top:1309px;" width="15" height="14" viewBox="0 0 15 14"><path d="M4 5L7.5 9L11 5Z" fill="#555"/></svg>
<div style="left:92px;top:1324px;width:1296px;height:26px;background:#efefef;border-left:1px solid #b4b4b4;border-bottom:1px solid #b4b4b4"></div>
<div class="t" style="left:93px;top:1330.8px;font-size:12px;">Command:</div>
<div style="left:155px;top:1328px;width:1207px;height:19px;background:#fff"></div>
<div style="left:1363px;top:1326px;width:24px;height:23px;border:1px solid #aaa;border-radius:3px;background:linear-gradient(#fdfdfd,#ececec)"></div>
<svg style="position:absolute;left:1368px;top:1331px;" width="14" height="12" viewBox="0 0 14 12"><rect x="0.8" y="1" width="12.4" height="9.5" fill="#f2f2f2" stroke="#111" stroke-width="1"/><rect x="0.5" y="0.5" width="13" height="2.6" fill="#000"/></svg>
<div style="left:92px;top:1218px;width:1296px;height:8px;background:#efefef"></div>
<div style="left:1387px;top:1226px;width:1px;height:124px;background:#b4b4b4"></div>
<div style="left:91px;top:1218px;width:1px;height:132px;background:#b4b4b4"></div>
<div class="t" style="left:6px;top:1356.4px;font-size:12px;transform:scaleX(0.95);transform-origin:0 0">363.5364,-198.1425</div>
<div class="t" style="left:6px;top:1376.4px;font-size:12px;transform:scaleX(0.95);transform-origin:0 0">@138.5364,-38.1425</div>
<div style="left:290px;top:1353px;width:1px;height:39px;background:#aaa"></div>
<div class="t" style="left:294px;top:1356.4px;font-size:12px;transform:scaleX(0.95);transform-origin:0 0">414.028&lt;331°</div>
<div class="t" style="left:294px;top:1376.4px;font-size:12px;transform:scaleX(0.95);transform-origin:0 0">@143.6913&lt;345°</div>
<div style="left:579px;top:1366px;width:1px;height:16px;border-left:1px dotted #aaa"></div>
<div class="t" style="left:685px;top:1367.1px;font-size:12px;">Select entity or region</div>
<svg style="position:absolute;left:815px;top:1356px;" width="20" height="32" viewBox="0 0 20 32"><path d="M9.5 1.5C4.5 1.5 1.5 5 1.5 10V22C1.5 27 4.5 30.5 9.5 30.5S17.5 27 17.5 22V10C17.5 5 14.5 1.5 9.5 1.5Z" fill="#fff" stroke="#555" stroke-width="1"/><path d="M1.5 12.5Q9.5 10.5 17.5 12.5M9.5 1.5V11" stroke="#555" stroke-width="1"/><rect x="8" y="3.5" width="3" height="7" rx="1.5" fill="#fff" stroke="#555" stroke-width="0.9"/></svg>
<div style="left:1072px;top:1366px;width:1px;height:16px;border-left:1px dotted #aaa"></div>
<div class="t" style="left:1076px;top:1367.1px;font-size:12px;">No entities selected.</div>
<div style="left:1443px;top:1366px;width:1px;height:16px;border-left:1px dotted #aaa"></div>
<div class="t" style="left:1399px;top:65.8px;font-size:12px;">Block List</div>
<svg style="position:absolute;left:1646px;top:66px;" width="12" height="12" viewBox="0 0 12 12"><rect x="0.5" y="0.5" width="11" height="11" rx="2" fill="none" stroke="#666" stroke-width="1"/><rect x="5" y="2.5" width="4.5" height="4.5" fill="none" stroke="#444" stroke-width="1"/><rect x="2.5" y="5" width="4.5" height="4.5" fill="#eee" stroke="#444" stroke-width="1"/></svg>
<svg style="position:absolute;left:1660px;top:66px;" width="12" height="12" viewBox="0 0 12 12"><rect x="0.5" y="0.5" width="11" height="11" rx="2" fill="none" stroke="#666" stroke-width="1"/><path d="M3 3L9 9M9 3L3 9" stroke="#444" stroke-width="1.8"/></svg>
<div class="db" style="left:1394px;top:82px;width:34px;height:23px;"></div>
<svg style="position:absolute;left:1403px;top:85px;" width="16" height="16" viewBox="0 0 16 16"><path d="M0.5 7C2 3 5 1 8 1S14 3 15.5 7C14 10.8 11 12.6 8 12.6S2 10.8 0.5 7Z" fill="#000"/><path d="M2.9 4.6C2.9 8.6 5.2 10.5 8 10.5S13.1 8.6 13.1 4.6C12.5 4.4 3.5 4.4 2.9 4.6Z" fill="#fff"/><ellipse cx="8.1" cy="6.3" rx="2.9" ry="2.9" fill="#000"/><path d="M2.5 4.8C4 3.8 12 3.8 13.5 4.8L13 3.2H3Z" fill="#000"/></svg>
<div class="db" style="left:1429px;top:82px;width:34px;height:23px;"></div>
<svg style="position:absolute;left:1438px;top:85px;" width="16" height="16" viewBox="0 0 16 16"><path d="M0.5 7C2 3 5 1 8 1S14 3 15.5 7C14 10.8 11 12.6 8 12.6S2 10.8 0.5 7Z" fill="#a8a8a8"/><path d="M2.9 4.6C2.9 8.6 5.2 10.5 8 10.5S13.1 8.6 13.1 4.6C12.5 4.4 3.5 4.4 2.9 4.6Z" fill="#f2f2f2"/><ellipse cx="8.1" cy="6.3" rx="2.9" ry="2.9" fill="#a8a8a8"/><path d="M2.5 4.8C4 3.8 12 3.8 13.5 4.8L13 3.2H3Z" fill="#a8a8a8"/></svg>
<div class="db" style="left:1464px;top:82px;width:34px;height:23px;"></div>
<svg style="position:absolute;left:1473px;top:85px;" width="16" height="16" viewBox="0 0 16 16"><path d="M6.7 2.2H9.3V6.7H13.8V9.3H9.3V13.8H6.7V9.3H2.2V6.7H6.7Z" fill="#f00" stroke="#700" stroke-width="0.6" stroke-linejoin="round"/></svg>
<div class="db" style="left:1499px;top:82px;width:33px;height:23px;"></div>
<svg style="position:absolute;left:1508px;top:85px;" width="16" height="16" viewBox="0 0 16 16"><rect x="1.5" y="6.3" width="13" height="3.4" fill="#888"/></svg>
<div class="db" style="left:1534px;top:82px;width:33px;height:23px;"></div>
<svg style="position:absolute;left:1543px;top:85px;" width="16" height="16" viewBox="0 0 16 16"><text x="8" y="12.5" font-size="12" text-anchor="middle" fill="#777" font-family="Liberation Sans,sans-serif">a|b</text></svg>
<div class="db" style="left:1568px;top:82px;width:34px;height:23px;"></div>
<svg style="position:absolute;left:1578px;top:85px;" width="16" height="16" viewBox="0 0 16 16"><path d="M1.5 15L2.3 11.6L12.5 1.4L15 3.9L4.8 14.1Z" fill="#dba545" stroke="#8a6420" stroke-width="0.6"/><path d="M12.5 1.4L15 3.9L16 2.9L13.5 0.4Z" fill="#e52020"/><path d="M1.5 15L2.3 11.6L4.8 14.1Z" fill="#555"/></svg>
<div class="db" style="left:1603px;top:82px;width:34px;height:23px;"></div>
<svg style="position:absolute;left:1613px;top:85px;" width="16" height="16" viewBox="0 0 16 16"><rect x="3" y="1" width="10" height="14" fill="#eee" stroke="#ddd"/><path d="M6 3C10 3 10 6 10 8V12L8 14L6 12V8C6 6 8 5 6 5Z" fill="#c8c8c8"/></svg>
<div class="db" style="left:1638px;top:82px;width:34px;height:23px;"></div>
<svg style="position:absolute;left:1648px;top:85px;" width="16" height="16" viewBox="0 0 16 16"><rect x="2" y="2" width="12" height="12" rx="1" fill="#f06040" stroke="#d84030" stroke-width="1"/><path d="M5 5L11 11M11 5L5 11" stroke="#fff" stroke-width="2"/></svg>
<div style="left:1394px;top:104px;width:280px;height:300px;background:#fff;border:1px solid #b4b4b4"></div>
<svg style="position:absolute;left:1398px;top:108px;" width="16" height="15" viewBox="0 0 16 15"><path d="M0.5 7C2 3 5 1 8 1S14 3 15.5 7C14 10.8 11 12.6 8 12.6S2 10.8 0.5 7Z" fill="#000"/><path d="M2.9 4.6C2.9 8.6 5.2 10.5 8 10.5S13.1 8.6 13.1 4.6C12.5 4.4 3.5 4.4 2.9 4.6Z" fill="#fff"/><ellipse cx="8.1" cy="6.3" rx="2.9" ry="2.9" fill="#000"/><path d="M2.5 4.8C4 3.8 12 3.8 13.5 4.8L13 3.2H3Z" fill="#000"/></svg>
<svg style="position:absolute;left:1420px;top:107px;" width="16" height="16" viewBox="0 0 16 16"><path d="M1.5 15L2.3 11.6L12.5 1.4L15 3.9L4.8 14.1Z" fill="#dba545" stroke="#8a6420" stroke-width="0.6"/><path d="M12.5 1.4L15 3.9L16 2.9L13.5 0.4Z" fill="#e52020"/><path d="M1.5 15L2.3 11.6L4.8 14.1Z" fill="#555"/></svg>
<div class="t" style="left:1442px;top:108.8px;font-size:12px;">*Model_Space</div>
<svg style="position:absolute;left:1398px;top:126px;" width="16" height="15" viewBox="0 0 16 15"><path d="M0.5 7C2 3 5 1 8 1S14 3 15.5 7C14 10.8 11 12.6 8 12.6S2 10.8 0.5 7Z" fill="#000"/><path d="M2.9 4.6C2.9 8.6 5.2 10.5 8 10.5S13.1 8.6 13.1 4.6C12.5 4.4 3.5 4.4 2.9 4.6Z" fill="#fff"/><ellipse cx="8.1" cy="6.3" rx="2.9" ry="2.9" fill="#000"/><path d="M2.5 4.8C4 3.8 12 3.8 13.5 4.8L13 3.2H3Z" fill="#000"/></svg>
<div class="t" style="left:1442px;top:126.8px;font-size:12px;">inner</div>
<svg style="position:absolute;left:1398px;top:144px;" width="16" height="15" viewBox="0 0 16 15"><path d="M0.5 7C2 3 5 1 8 1S14 3 15.5 7C14 10.8 11 12.6 8 12.6S2 10.8 0.5 7Z" fill="#000"/><path d="M2.9 4.6C2.9 8.6 5.2 10.5 8 10.5S13.1 8.6 13.1 4.6C12.5 4.4 3.5 4.4 2.9 4.6Z" fill="#fff"/><ellipse cx="8.1" cy="6.3" rx="2.9" ry="2.9" fill="#000"/><path d="M2.5 4.8C4 3.8 12 3.8 13.5 4.8L13 3.2H3Z" fill="#000"/></svg>
<div class="t" style="left:1442px;top:144.8px;font-size:12px;">outer_d8</div>
<svg style="position:absolute;left:1398px;top:162px;" width="16" height="15" viewBox="0 0 16 15"><path d="M0.5 7C2 3 5 1 8 1S14 3 15.5 7C14 10.8 11 12.6 8 12.6S2 10.8 0.5 7Z" fill="#000"/><path d="M2.9 4.6C2.9 8.6 5.2 10.5 8 10.5S13.1 8.6 13.1 4.6C12.5 4.4 3.5 4.4 2.9 4.6Z" fill="#fff"/><ellipse cx="8.1" cy="6.3" rx="2.9" ry="2.9" fill="#000"/><path d="M2.5 4.8C4 3.8 12 3.8 13.5 4.8L13 3.2H3Z" fill="#000"/></svg>
<div class="t" style="left:1442px;top:162.8px;font-size:12px;">outer_d10</div>
<svg style="position:absolute;left:1398px;top:180px;" width="16" height="15" viewBox="0 0 16 15"><path d="M0.5 7C2 3 5 1 8 1S14 3 15.5 7C14 10.8 11 12.6 8 12.6S2 10.8 0.5 7Z" fill="#000"/><path d="M2.9 4.6C2.9 8.6 5.2 10.5 8 10.5S13.1 8.6 13.1 4.6C12.5 4.4 3.5 4.4 2.9 4.6Z" fill="#fff"/><ellipse cx="8.1" cy="6.3" rx="2.9" ry="2.9" fill="#000"/><path d="M2.5 4.8C4 3.8 12 3.8 13.5 4.8L13 3.2H3Z" fill="#000"/></svg>
<div class="t" style="left:1442px;top:180.8px;font-size:12px;">*Paper_Space</div>
<svg style="position:absolute;left:1398px;top:198px;" width="16" height="15" viewBox="0 0 16 15"><path d="M0.5 7C2 3 5 1 8 1S14 3 15.5 7C14 10.8 11 12.6 8 12.6S2 10.8 0.5 7Z" fill="#000"/><path d="M2.9 4.6C2.9 8.6 5.2 10.5 8 10.5S13.1 8.6 13.1 4.6C12.5 4.4 3.5 4.4 2.9 4.6Z" fill="#fff"/><ellipse cx="8.1" cy="6.3" rx="2.9" ry="2.9" fill="#000"/><path d="M2.5 4.8C4 3.8 12 3.8 13.5 4.8L13 3.2H3Z" fill="#000"/></svg>
<div class="t" style="left:1442px;top:198.8px;font-size:12px;">*Paper_Space0</div>
<svg style="position:absolute;left:1525px;top:404px;" width="20" height="3" viewBox="0 0 20 3"><rect x="0" y="1" width="1" height="1" fill="#aaa"/><rect x="3" y="1" width="1" height="1" fill="#aaa"/><rect x="6" y="1" width="1" height="1" fill="#aaa"/><rect x="9" y="1" width="1" height="1" fill="#aaa"/><rect x="12" y="1" width="1" height="1" fill="#aaa"/><rect x="15" y="1" width="1" height="1" fill="#aaa"/></svg>
<div class="t" style="left:1399px;top:411.8px;font-size:12px;">Layer List</div>
<svg style="position:absolute;left:1646px;top:412px;" width="12" height="12" viewBox="0 0 12 12"><rect x="0.5" y="0.5" width="11" height="11" rx="2" fill="none" stroke="#666" stroke-width="1"/><rect x="5" y="2.5" width="4.5" height="4.5" fill="none" stroke="#444" stroke-width="1"/><rect x="2.5" y="5" width="4.5" height="4.5" fill="#eee" stroke="#444" stroke-width="1"/></svg>
<svg style="position:absolute;left:1660px;top:412px;" width="12" height="12" viewBox="0 0 12 12"><rect x="0.5" y="0.5" width="11" height="11" rx="2" fill="none" stroke="#666" stroke-width="1"/><path d="M3 3L9 9M9 3L3 9" stroke="#444" stroke-width="1.8"/></svg>
<div class="db" style="left:1394px;top:429px;width:55px;height:23px;"></div>
<svg style="position:absolute;left:1414px;top:432px;" width="16" height="16" viewBox="0 0 16 16"><path d="M0.5 7C2 3 5 1 8 1S14 3 15.5 7C14 10.8 11 12.6 8 12.6S2 10.8 0.5 7Z" fill="#000"/><path d="M2.9 4.6C2.9 8.6 5.2 10.5 8 10.5S13.1 8.6 13.1 4.6C12.5 4.4 3.5 4.4 2.9 4.6Z" fill="#fff"/><ellipse cx="8.1" cy="6.3" rx="2.9" ry="2.9" fill="#000"/><path d="M2.5 4.8C4 3.8 12 3.8 13.5 4.8L13 3.2H3Z" fill="#000"/></svg>
<div class="db" style="left:1450px;top:429px;width:55px;height:23px;"></div>
<svg style="position:absolute;left:1470px;top:432px;" width="16" height="16" viewBox="0 0 16 16"><path d="M0.5 7C2 3 5 1 8 1S14 3 15.5 7C14 10.8 11 12.6 8 12.6S2 10.8 0.5 7Z" fill="#a8a8a8"/><path d="M2.9 4.6C2.9 8.6 5.2 10.5 8 10.5S13.1 8.6 13.1 4.6C12.5 4.4 3.5 4.4 2.9 4.6Z" fill="#f2f2f2"/><ellipse cx="8.1" cy="6.3" rx="2.9" ry="2.9" fill="#a8a8a8"/><path d="M2.5 4.8C4 3.8 12 3.8 13.5 4.8L13 3.2H3Z" fill="#a8a8a8"/></svg>
<div class="db" style="left:1506px;top:429px;width:54px;height:23px;"></div>
<svg style="position:absolute;left:1526px;top:432px;" width="16" height="16" viewBox="0 0 16 16"><path d="M6.7 2.2H9.3V6.7H13.8V9.3H9.3V13.8H6.7V9.3H2.2V6.7H6.7Z" fill="#f00" stroke="#700" stroke-width="0.6" stroke-linejoin="round"/></svg>
<div class="db" style="left:1561px;top:429px;width:55px;height:23px;"></div>
<svg style="position:absolute;left:1581px;top:432px;" width="16" height="16" viewBox="0 0 16 16"><rect x="1.5" y="6" width="13" height="3.6" fill="#e00000"/></svg>
<div class="db" style="left:1617px;top:429px;width:55px;height:23px;"></div>
<svg style="position:absolute;left:1637px;top:432px;" width="16" height="16" viewBox="0 0 16 16"><path d="M1.5 15L2.3 11.6L12.5 1.4L15 3.9L4.8 14.1Z" fill="#dba545" stroke="#8a6420" stroke-width="0.6"/><path d="M12.5 1.4L15 3.9L16 2.9L13.5 0.4Z" fill="#e52020"/><path d="M1.5 15L2.3 11.6L4.8 14.1Z" fill="#555"/></svg>
<div style="left:1394px;top:451px;width:280px;height:419px;background:#fff;border:1px solid #b4b4b4"></div>
<div style="left:1395px;top:452px;width:278px;height:19px;background:#2f89c5"></div>
<svg style="position:absolute;left:1398px;top:454px;" width="16" height="15" viewBox="0 0 16 15"><path d="M0.5 7C2 3 5 1 8 1S14 3 15.5 7C14 10.8 11 12.6 8 12.6S2 10.8 0.5 7Z" fill="#0a2a44"/><path d="M2.9 4.6C2.9 8.6 5.2 10.5 8 10.5S13.1 8.6 13.1 4.6C12.5 4.4 3.5 4.4 2.9 4.6Z" fill="#2f89c5"/><ellipse cx="8.1" cy="6.3" rx="2.9" ry="2.9" fill="#0a2a44"/><path d="M2.5 4.8C4 3.8 12 3.8 13.5 4.8L13 3.2H3Z" fill="#0a2a44"/></svg>
<svg style="position:absolute;left:1417px;top:454px;" width="12" height="15" viewBox="0 0 12 15"><path d="M3 7V4.5C3 2 4.5 1 6 1S9 2 9 4.5V7" fill="none" stroke="#8fa6b6" stroke-width="1.6"/><rect x="1.5" y="6.5" width="9" height="7.5" rx="1" fill="#8fa6b6"/></svg>
<div class="t" style="left:1435px;top:454.8px;font-size:12px;color:#fff">0</div>
<svg style="position:absolute;left:1525px;top:870px;" width="20" height="3" viewBox="0 0 20 3"><rect x="0" y="1" width="1" height="1" fill="#aaa"/><rect x="3" y="1" width="1" height="1" fill="#aaa"/><rect x="6" y="1" width="1" height="1" fill="#aaa"/><rect x="9" y="1" width="1" height="1" fill="#aaa"/><rect x="12" y="1" width="1" height="1" fill="#aaa"/><rect x="15" y="1" width="1" height="1" fill="#aaa"/></svg>
<div class="t" style="left:1399px;top:878.8px;font-size:12px;">Property Editor</div>
<svg style="position:absolute;left:1646px;top:879px;" width="12" height="12" viewBox="0 0 12 12"><rect x="0.5" y="0.5" width="11" height="11" rx="2" fill="none" stroke="#666" stroke-width="1"/><rect x="5" y="2.5" width="4.5" height="4.5" fill="none" stroke="#444" stroke-width="1"/><rect x="2.5" y="5" width="4.5" height="4.5" fill="#eee" stroke="#444" stroke-width="1"/></svg>
<svg style="position:absolute;left:1660px;top:879px;" width="12" height="12" viewBox="0 0 12 12"><rect x="0.5" y="0.5" width="11" height="11" rx="2" fill="none" stroke="#666" stroke-width="1"/><path d="M3 3L9 9M9 3L3 9" stroke="#444" stroke-width="1.8"/></svg>
<div style="left:1394px;top:895px;width:280px;height:455px;border:1px solid #b4b4b4;background:#efefef"></div>
<div class="t" style="left:1404px;top:910.8px;font-size:12px;">Selection:</div>
<div style="left:1462px;top:905px;width:201px;height:25px;border:1px solid #ababab;border-radius:3px;background:linear-gradient(#fdfdfd,#f0f0f0)"></div>
<div class="t" style="left:1467px;top:910.8px;font-size:12px;">No Selection</div>
<svg style="position:absolute;left:1645px;top:913px;" width="10" height="8" viewBox="0 0 10 8"><path d="M1 2L5 6L9 2Z" fill="#333"/></svg>
<div class="t" style="left:1404px;top:938.8px;font-size:12px;color:#b8b8b8">General Properties</div>
<div style="left:1405px;top:957px;width:258px;height:204px;border:1px solid #dadada;border-radius:2px;background:#ececec"></div>
<div class="t" style="right:220px;top:970.8px;font-size:12px;color:#b4b4b4">Layer:</div>
<div style="left:1501px;top:965px;width:150px;height:25px;border:1px solid #c4c4c4;border-radius:3px;background:linear-gradient(#fafafa,#efefef)"></div>
<svg style="position:absolute;left:1633px;top:974px;" width="10" height="8" viewBox="0 0 10 8"><path d="M1 2L5 6L9 2Z" fill="#c0c0c0"/></svg>
<div class="t" style="right:220px;top:997.8px;font-size:12px;color:#b4b4b4">Color:</div>
<div style="left:1501px;top:992px;width:150px;height:25px;border:1px solid #c4c4c4;border-radius:3px;background:linear-gradient(#fafafa,#efefef)"></div>
<svg style="position:absolute;left:1633px;top:1001px;" width="10" height="8" viewBox="0 0 10 8"><path d="M1 2L5 6L9 2Z" fill="#c0c0c0"/></svg>
<div style="left:1507px;top:999px;width:16px;height:11px;border:1px solid #b0b0b0;background:#fff"></div>
<div class="t" style="left:1527px;top:997.8px;font-size:12px;color:#b4b4b4">By Layer</div>
<div class="t" style="right:220px;top:1024.8px;font-size:12px;color:#b4b4b4">Lineweight:</div>
<div style="left:1501px;top:1019px;width:150px;height:25px;border:1px solid #c4c4c4;border-radius:3px;background:linear-gradient(#fafafa,#efefef)"></div>
<svg style="position:absolute;left:1633px;top:1028px;" width="10" height="8" viewBox="0 0 10 8"><path d="M1 2L5 6L9 2Z" fill="#c0c0c0"/></svg>
<div style="left:1507px;top:1031px;width:16px;height:1px;background:#b0b0b0"></div>
<div class="t" style="left:1527px;top:1024.8px;font-size:12px;color:#b4b4b4">By Layer</div>
<div class="t" style="right:220px;top:1051.8px;font-size:12px;color:#b4b4b4">Linetype:</div>
<div style="left:1501px;top:1046px;width:150px;height:25px;border:1px solid #c4c4c4;border-radius:3px;background:linear-gradient(#fafafa,#efefef)"></div>
<svg style="position:absolute;left:1633px;top:1055px;" width="10" height="8" viewBox="0 0 10 8"><path d="M1 2L5 6L9 2Z" fill="#c0c0c0"/></svg>
<div class="t" style="left:1506px;top:1051.8px;font-size:12px;color:#b4b4b4">By Layer</div>
<div class="t" style="right:220px;top:1078.8px;font-size:12px;color:#b4b4b4">Linetype Scale:</div>
<div style="left:1501px;top:1073px;width:150px;height:25px;border:1px solid #b8b8b8;border-radius:3px;background:#efefef"></div>
<div class="t" style="right:220px;top:1105.8px;font-size:12px;color:#b4b4b4">Draw Order:</div>
<div style="left:1501px;top:1100px;width:150px;height:25px;border:1px solid #b8b8b8;border-radius:3px;background:#efefef"></div>
<div class="t" style="right:220px;top:1132.8px;font-size:12px;color:#b4b4b4">Handle:</div>
<div style="left:1501px;top:1127px;width:150px;height:25px;border:1px solid #b8b8b8;border-radius:3px;background:#efefef"></div>
<div style="left:1673px;top:63px;width:1px;height:1287px;background:#b4b4b4"></div>
<div style="left:1674px;top:63px;width:36px;height:1287px;background:linear-gradient(90deg,#fafafa,#ececec)"></div>
<svg style="position:absolute;left:1685px;top:69px;" width="17" height="4" viewBox="0 0 17 4"><rect x="0" y="0" width="1" height="1" fill="#bbb"/><rect x="0" y="3" width="1" height="1" fill="#bbb"/><rect x="3" y="0" width="1" height="1" fill="#bbb"/><rect x="3" y="3" width="1" height="1" fill="#bbb"/><rect x="6" y="0" width="1" height="1" fill="#bbb"/><rect x="6" y="3" width="1" height="1" fill="#bbb"/><rect x="9" y="0" width="1" height="1" fill="#bbb"/><rect x="9" y="3" width="1" height="1" fill="#bbb"/><rect x="12" y="0" width="1" height="1" fill="#bbb"/><rect x="12" y="3" width="1" height="1" fill="#bbb"/><rect x="15" y="0" width="1" height="1" fill="#bbb"/><rect x="15" y="3" width="1" height="1" fill="#bbb"/></svg>
<div style="left:1677px;top:76px;width:29px;height:29px;border:1px solid #666;background:linear-gradient(#6c6c6c,#a8a8a8 30%,#c8c8c8 60%,#d4d4d4)"></div>
<svg style="position:absolute;left:1680px;top:79px;" width="22" height="22" viewBox="0 0 22 22"><rect x="1.5" y="1.5" width="19" height="19" rx="2" fill="#fff" stroke="#8a8a8a" stroke-width="1"/><rect x="2" y="2" width="18" height="3.2" fill="#000"/><rect x="3" y="2.6" width="1.8" height="1.8" fill="#fff"/><path d="M6 9L10 7.5V16L6 17.5Z" fill="#999"/><path d="M9.5 8L15.5 5.5V14L9.5 16.5Z" fill="#f6d0d0" stroke="#d07070" stroke-width="0.6"/></svg>
<div style="left:1677px;top:106px;width:29px;height:29px;border:1px solid #666;background:linear-gradient(#6c6c6c,#a8a8a8 30%,#c8c8c8 60%,#d4d4d4)"></div>
<svg style="position:absolute;left:1680px;top:109px;" width="22" height="22" viewBox="0 0 22 22"><rect x="1.5" y="1.5" width="19" height="19" rx="2" fill="#fff" stroke="#8a8a8a" stroke-width="1"/><rect x="2" y="2" width="18" height="3.2" fill="#000"/><rect x="3" y="2.6" width="1.8" height="1.8" fill="#fff"/><rect x="5.5" y="8" width="8" height="6" fill="#f2e4a8" stroke="#a89858" stroke-width="0.7"/><circle cx="13" cy="13.5" r="3.6" fill="#f2e4a8" stroke="#a89858" stroke-width="0.7"/></svg>
<div style="left:1677px;top:143px;width:29px;height:29px;border:1px solid #666;background:linear-gradient(#6c6c6c,#a8a8a8 30%,#c8c8c8 60%,#d4d4d4)"></div>
<svg style="position:absolute;left:1680px;top:146px;" width="22" height="22" viewBox="0 0 22 22"><rect x="1.5" y="1.5" width="19" height="19" rx="2" fill="#fff" stroke="#8a8a8a" stroke-width="1"/><rect x="2" y="2" width="18" height="3.2" fill="#000"/><rect x="3" y="2.6" width="1.8" height="1.8" fill="#fff"/><path d="M5 8h2.5v2H5zM5 11.5h2.5v2H5zM5 15h2.5v2H5z" fill="#000"/><path d="M9 8.2h8v1.8h-8zM9 11.7h8v1.8h-8zM9 15.2h8v1.8h-8z" fill="#ddd" stroke="#888" stroke-width="0.5"/></svg>
<svg style="position:absolute;left:1680px;top:175px;" width="22" height="23" viewBox="0 0 22 23"><rect x="1.5" y="1.5" width="19" height="19" rx="2" fill="#fff" stroke="#8a8a8a" stroke-width="1"/><rect x="2" y="2" width="18" height="3.2" fill="#000"/><rect x="3" y="2.6" width="1.8" height="1.8" fill="#fff"/><path d="M6 8.5V17L9 15V10.5Z" fill="none" stroke="#555" stroke-width="0.8"/><rect x="9" y="10.5" width="7" height="4.5" fill="#555"/><path d="M3.5 12.8H19" stroke="#e06060" stroke-width="0.5"/></svg>
<div style="left:1677px;top:210px;width:29px;height:29px;border:1px solid #666;background:linear-gradient(#6c6c6c,#a8a8a8 30%,#c8c8c8 60%,#d4d4d4)"></div>
<svg style="position:absolute;left:1680px;top:213px;" width="22" height="22" viewBox="0 0 22 22"><rect x="1.5" y="1.5" width="19" height="19" rx="2" fill="#fff" stroke="#8a8a8a" stroke-width="1"/><rect x="2" y="2" width="18" height="3.2" fill="#000"/><rect x="3" y="2.6" width="1.8" height="1.8" fill="#fff"/><path d="M4.5 8h9M4.5 10h10M4.5 12h8M4.5 14h10" stroke="#bbb" stroke-width="0.6"/><path d="M3 17.5H19" stroke="#999" stroke-width="0.8"/></svg>
<div style="left:1683px;top:139px;width:19px;height:1px;background:#d4d4d4"></div>
<div style="left:1683px;top:206px;width:19px;height:1px;background:#d4d4d4"></div>
<svg style="position:absolute;left:1697px;top:1381px;" width="12" height="12" viewBox="0 0 12 12"><rect x="9" y="1" width="1" height="1" fill="#aaa"/><rect x="9" y="4" width="1" height="1" fill="#aaa"/><rect x="6" y="4" width="1" height="1" fill="#aaa"/><rect x="9" y="7" width="1" height="1" fill="#aaa"/><rect x="6" y="7" width="1" height="1" fill="#aaa"/><rect x="3" y="7" width="1" height="1" fill="#aaa"/><rect x="9" y="10" width="1" height="1" fill="#aaa"/><rect x="6" y="10" width="1" height="1" fill="#aaa"/><rect x="3" y="10" width="1" height="1" fill="#aaa"/><rect x="0" y="10" width="1" height="1" fill="#aaa"/></svg>
<svg style="position:absolute;left:1390px;top:700px;" width="3" height="18" viewBox="0 0 3 18"><rect x="1" y="0" width="1" height="1" fill="#aaa"/><rect x="1" y="3" width="1" height="1" fill="#aaa"/><rect x="1" y="6" width="1" height="1" fill="#aaa"/><rect x="1" y="9" width="1" height="1" fill="#aaa"/><rect x="1" y="12" width="1" height="1" fill="#aaa"/><rect x="1" y="15" width="1" height="1" fill="#aaa"/></svg>
<svg style="position:absolute;left:1020px;top:750px;filter:drop-shadow(1px 1.5px 1px rgba(0,0,0,0.45))" width="28" height="34" viewBox="0 0 28 34"><path d="M7 5V24.5L11.3 20.4L14.8 27.8L18.2 26.3L14.8 19.2H20.3Z" fill="#000" stroke="#fff" stroke-width="1.6" stroke-linejoin="round"/></svg>
</body></html>
